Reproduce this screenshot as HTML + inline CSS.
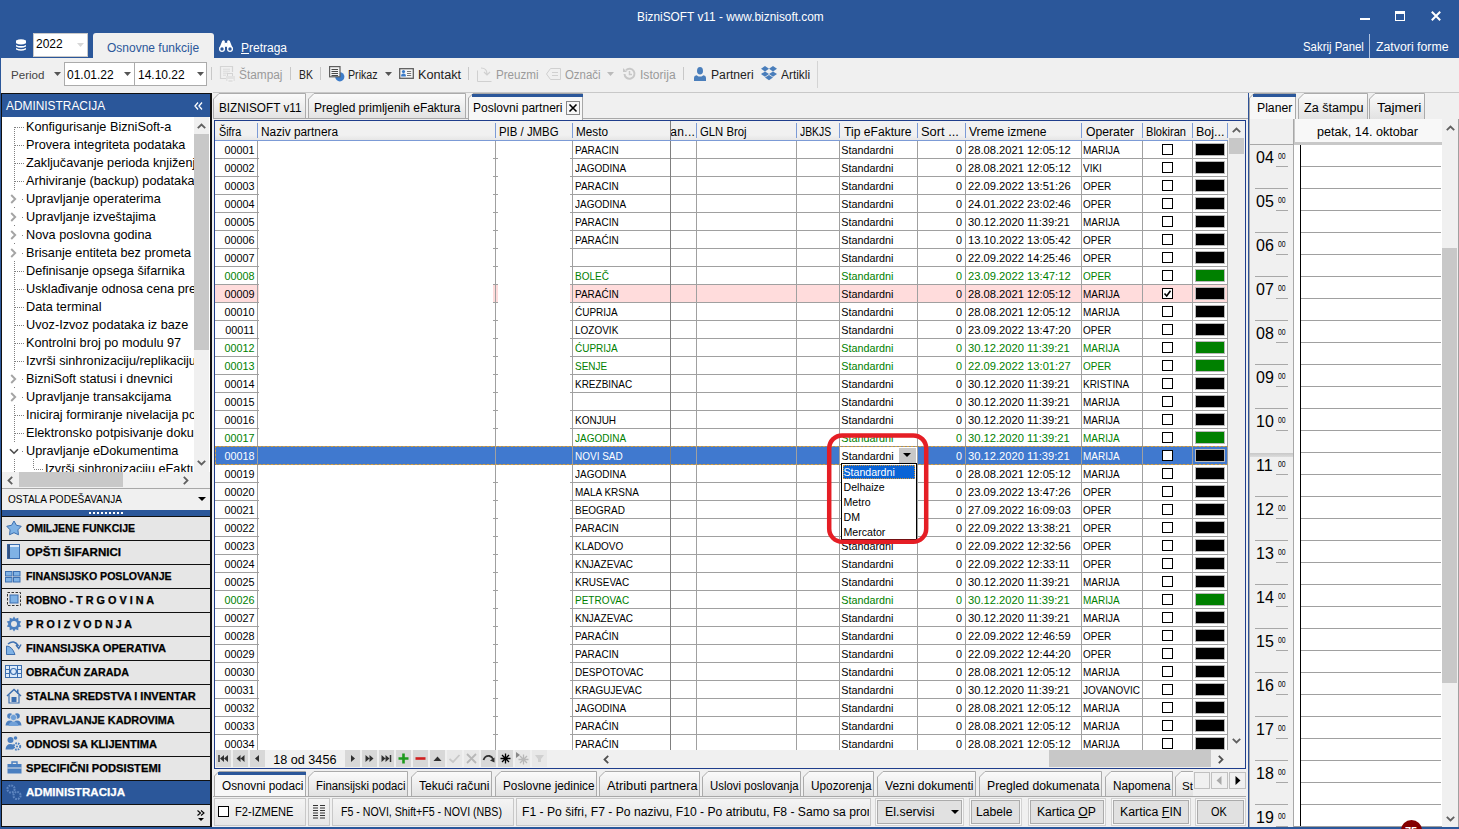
<!DOCTYPE html><html><head><meta charset="utf-8"><style>
html,body{margin:0;padding:0;}
body{width:1459px;height:829px;overflow:hidden;position:relative;background:#F0F0F0;font-family:"Liberation Sans",sans-serif;}
.t{position:absolute;white-space:nowrap;}
.r{position:absolute;box-sizing:border-box;}
svg.r{overflow:visible;}
</style></head><body>
<div class="r" style="left:0px;top:0px;width:1459px;height:58px;background:#2B579A;"></div>
<div class="t " style="left:637px;top:10.00px;font-size:12px;line-height:15px;color:#fff;transform:scaleX(0.9881);transform-origin:0 0;">BizniSOFT v11 - www.biznisoft.com</div>
<div class="r" style="left:1360px;top:18px;width:10px;height:2px;background:#fff;"></div>
<div class="r" style="left:1395px;top:11px;width:10px;height:10px;background:none;border:1.3px solid #fff;border-top-width:3px;"></div>
<svg class="r" style="left:1431px;top:11px;" width="10" height="10" viewBox="0 0 10 10"><path d="M0.8 0.8 L9.2 9.2 M9.2 0.8 L0.8 9.2" stroke="#fff" stroke-width="2"/></svg>
<svg class="r" style="left:16px;top:39px;" width="10" height="13" viewBox="0 0 10 13"><path d="M0 1.6 Q5 -0.9 10 1.6 V4.3 Q5 6.7 0 4.3Z M0 5.9 Q5 8.3 10 5.9 V7.6 Q5 10 0 7.6Z M0 9 Q5 11.4 10 9 V10.6 Q5 13 0 10.6Z" fill="#fff"/></svg>
<div class="r" style="left:33px;top:33px;width:55px;height:24px;background:#fff;border:1px solid #C9C9C9;"></div>
<div class="t " style="left:36px;top:37.00px;font-size:12px;line-height:15px;color:#000;">2022</div>
<svg class="r" style="left:77px;top:43px;" width="7" height="4" viewBox="0 0 7 4"><path d="M0 0 H7 L3.5 4Z" fill="#D8D8D8"/></svg>
<div class="r" style="left:93px;top:33px;width:121px;height:26px;background:#F0F0F0;border-radius:3px 3px 0 0;"></div>
<div class="t " style="left:107px;top:41.00px;font-size:12px;line-height:15px;color:#2B579A;">Osnovne funkcije</div>
<svg class="r" style="left:219px;top:39px;" width="14" height="14" viewBox="0 0 14 14"><path d="M3.2 2 Q4.4 0.6 5.8 2 L6 9.5 L0.2 9.5Z M8.2 2 Q9.6 0.6 10.8 2 L13.8 9.5 L8 9.5Z" fill="#fff"/><rect x="5.5" y="3.8" width="3" height="4" fill="#fff"/><circle cx="3" cy="10" r="3" fill="#fff"/><circle cx="11" cy="10" r="3" fill="#fff"/><circle cx="3" cy="10" r="1.7" fill="#2B579A"/><circle cx="11" cy="10" r="1.7" fill="#2B579A"/></svg>
<div class="t " style="left:241px;top:41.00px;font-size:12px;line-height:15px;color:#fff;"><u>P</u>retraga</div>
<div class="t " style="left:1302.5px;top:40.00px;font-size:12px;line-height:15px;color:#fff;transform:scaleX(0.9511);transform-origin:0 0;">Sakrij Panel</div>
<div class="r" style="left:1369px;top:34px;width:1px;height:24px;background:#AFC2E0;"></div>
<div class="t " style="left:1376px;top:40.00px;font-size:12px;line-height:15px;color:#fff;transform:scaleX(1.0257);transform-origin:0 0;">Zatvori forme</div>
<div class="r" style="left:1px;top:58px;width:1458px;height:35px;background:#F0F0F0;"></div>
<div class="t " style="left:11px;top:68.00px;font-size:11.6px;line-height:14px;color:#444;">Period</div>
<svg class="r" style="left:54px;top:72px;" width="7" height="4" viewBox="0 0 7 4"><path d="M0 0 H7 L3.5 4Z" fill="#555"/></svg>
<div class="r" style="left:64px;top:62px;width:71px;height:24px;background:#fff;border:1px solid #ABABAB;"></div>
<div class="t " style="left:67px;top:68.00px;font-size:12px;line-height:15px;color:#000;">01.01.22</div>
<svg class="r" style="left:124px;top:72px;" width="7" height="4" viewBox="0 0 7 4"><path d="M0 0 H7 L3.5 4Z" fill="#555"/></svg>
<div class="r" style="left:134px;top:62px;width:73px;height:24px;background:#fff;border:1px solid #ABABAB;"></div>
<div class="t " style="left:138px;top:68.00px;font-size:12px;line-height:15px;color:#000;">14.10.22</div>
<svg class="r" style="left:197px;top:72px;" width="7" height="4" viewBox="0 0 7 4"><path d="M0 0 H7 L3.5 4Z" fill="#555"/></svg>
<div class="r" style="left:211px;top:67px;width:1px;height:13px;background:#C8C8C8;"></div>
<div class="r" style="left:290px;top:67px;width:1px;height:13px;background:#C8C8C8;"></div>
<div class="r" style="left:320px;top:67px;width:1px;height:13px;background:#C8C8C8;"></div>
<div class="r" style="left:468px;top:67px;width:1px;height:13px;background:#C8C8C8;"></div>
<div class="r" style="left:683px;top:67px;width:1px;height:13px;background:#C8C8C8;"></div>
<svg class="r" style="left:220px;top:66px;" width="16" height="17" viewBox="0 0 16 17"><path d="M12.5 6 V0.5 H0.5 V12.5 H6" fill="none" stroke="#D4D4D4" stroke-width="1.2"/><path d="M3 3.2H10M3 5.2H10M3 7.2H8M3 9.2H6" stroke="#DADADA"/><rect x="7.5" y="7.5" width="5" height="3" fill="none" stroke="#D4D4D4"/><rect x="6" y="10" width="9" height="5" fill="#E2E2E2"/><rect x="8" y="13.5" width="5" height="3" fill="#E2E2E2" stroke="#F4F4F4" stroke-width="0.8"/></svg>
<div class="t " style="left:239.2px;top:68.00px;font-size:12px;line-height:15px;color:#9A9A9A;transform:scaleX(0.9881);transform-origin:0 0;">Štampaj</div>
<div class="t " style="left:299.4px;top:68.00px;font-size:12px;line-height:15px;color:#222;transform:scaleX(0.8683);transform-origin:0 0;">BK</div>
<svg class="r" style="left:328px;top:66px;" width="17" height="16" viewBox="0 0 17 16"><circle cx="11.8" cy="10.8" r="4.6" fill="#3D7CC9"/><rect x="1.6" y="0.6" width="10.4" height="10.2" fill="#F2F2F2" stroke="#5E5E5E" stroke-width="1.2"/><path d="M3.5 3.5H10M3.5 5.5H10M3.5 7.5H10M3.5 9.5H10" stroke="#4A4A4A" stroke-width="1"/></svg>
<div class="t " style="left:348.4px;top:68.00px;font-size:12px;line-height:15px;color:#222;transform:scaleX(0.8878);transform-origin:0 0;">Prikaz</div>
<svg class="r" style="left:385px;top:72px;" width="7" height="4" viewBox="0 0 7 4"><path d="M0 0 H7 L3.5 4Z" fill="#555"/></svg>
<svg class="r" style="left:399px;top:68px;" width="15" height="11" viewBox="0 0 15 11"><rect x="0.7" y="0.7" width="13.6" height="9.6" fill="#F7F7F7" stroke="#5E5E5E" stroke-width="1.3"/><circle cx="4.5" cy="3.6" r="1.6" fill="#3D7CC9"/><path d="M2.2 8.4 V7.2 Q2.2 5.6 4.5 5.6 Q6.8 5.6 6.8 7.2 V8.4Z" fill="#3D7CC9"/><path d="M8 3.5H12.2M8 5.5H12.2M8 7.5H12.2" stroke="#666" stroke-width="0.9"/></svg>
<div class="t " style="left:418.2px;top:68.00px;font-size:12px;line-height:15px;color:#222;transform:scaleX(1.0591);transform-origin:0 0;">Kontakt</div>
<svg class="r" style="left:477px;top:66px;" width="15" height="16" viewBox="0 0 15 16"><path d="M0.5 4.5 V15.5 H14.5" fill="none" stroke="#D0D0D0"/><path d="M4 2 Q10 2 10 8 M7 6 L10 9 L13 6" fill="none" stroke="#D0D0D0" stroke-width="1.2"/></svg>
<div class="t " style="left:496px;top:68.00px;font-size:12px;line-height:15px;color:#9A9A9A;transform:scaleX(0.9680);transform-origin:0 0;">Preuzmi</div>
<svg class="r" style="left:546px;top:68px;" width="15" height="12" viewBox="0 0 15 12"><path d="M4.5 0.5 H14.5 V11.5 H4.5 L0.5 6 Z" fill="none" stroke="#D0D0D0"/><path d="M6 4.5H12M6 7.5H12" stroke="#D0D0D0"/></svg>
<div class="t " style="left:565.2px;top:68.00px;font-size:12px;line-height:15px;color:#9A9A9A;transform:scaleX(0.9505);transform-origin:0 0;">Označi</div>
<svg class="r" style="left:607px;top:72px;" width="7" height="4" viewBox="0 0 7 4"><path d="M0 0 H7 L3.5 4Z" fill="#BBB"/></svg>
<svg class="r" style="left:622px;top:67px;" width="14" height="14" viewBox="0 0 14 14"><path d="M2.5 7 A5 5 0 1 0 4 3.2" fill="none" stroke="#C8C8C8" stroke-width="2"/><path d="M1 1 L5 5 L1 5Z" fill="#C8C8C8"/><path d="M7.5 4 V7.5 H10" fill="none" stroke="#C8C8C8" stroke-width="1.5"/></svg>
<div class="t " style="left:640px;top:68.00px;font-size:12px;line-height:15px;color:#9A9A9A;transform:scaleX(1.0072);transform-origin:0 0;">Istorija</div>
<svg class="r" style="left:694px;top:67px;" width="12" height="14" viewBox="0 0 12 14"><ellipse cx="6" cy="3.8" rx="3" ry="3.8" fill="#4A7EBB"/><path d="M0 14 V10.8 Q0 8.6 2.6 8.2 L4.5 9.4 H7.5 L9.4 8.2 Q12 8.6 12 10.8 V14Z" fill="#4A7EBB"/></svg>
<div class="t " style="left:711.2px;top:68.00px;font-size:12px;line-height:15px;color:#222;transform:scaleX(1.0139);transform-origin:0 0;">Partneri</div>
<svg class="r" style="left:761px;top:66px;" width="16" height="15" viewBox="0 0 16 15"><path d="M4 0 L0 2.7 L4 5.4 L8 2.7Z M12 0 L8 2.7 L12 5.4 L16 2.7Z M4 5.4 L0 8.1 L4 10.8 L8 8.1Z M12 5.4 L8 8.1 L12 10.8 L16 8.1Z M4 11.6 L8 9 L12 11.6 L8 14.3Z" fill="#4A7EBB"/></svg>
<div class="t " style="left:780.5px;top:68.00px;font-size:12px;line-height:15px;color:#222;transform:scaleX(0.9921);transform-origin:0 0;">Artikli</div>
<div class="r" style="left:817px;top:61px;width:1px;height:27px;background:#D4D4D4;"></div>
<div class="r" style="left:213px;top:92px;width:1246px;height:1px;background:#C8C8C8;"></div>
<div class="r" style="left:1px;top:93px;width:211px;height:734px;background:#fff;border:1px solid #111;border-right-width:2px;"></div>
<div class="r" style="left:2px;top:94px;width:208px;height:23px;background:#2B579A;"></div>
<div class="t " style="left:6px;top:99.00px;font-size:11.9px;line-height:15px;color:#fff;">ADMINISTRACIJA</div>
<svg class="r" style="left:194px;top:102px;" width="9" height="8" viewBox="0 0 9 8"><path d="M4 0.5 L1 4 L4 7.5 M8 0.5 L5 4 L8 7.5" fill="none" stroke="#fff" stroke-width="1.3"/></svg>
<div class="r" style="left:2px;top:117px;width:192px;height:355px;overflow:hidden;background:#fff">
<div class="r" style="left:12px;top:10px;width:1px;height:345px;background:repeating-linear-gradient(180deg,#808080 0 1px,transparent 1px 2px)"></div>
<div class="t " style="left:24px;top:2.00px;font-size:12.7px;line-height:16px;color:#000;">Konfigurisanje BizniSoft-a</div>
<div class="r" style="left:13px;top:10px;width:9px;height:1px;background:repeating-linear-gradient(90deg,#808080 0 1px,transparent 1px 2px)"></div>
<div class="t " style="left:24px;top:20.00px;font-size:12.7px;line-height:16px;color:#000;">Provera integriteta podataka</div>
<div class="r" style="left:13px;top:28px;width:9px;height:1px;background:repeating-linear-gradient(90deg,#808080 0 1px,transparent 1px 2px)"></div>
<div class="t " style="left:24px;top:38.00px;font-size:12.7px;line-height:16px;color:#000;">Zaključavanje perioda knjiženja</div>
<div class="r" style="left:13px;top:46px;width:9px;height:1px;background:repeating-linear-gradient(90deg,#808080 0 1px,transparent 1px 2px)"></div>
<div class="t " style="left:24px;top:56.00px;font-size:12.7px;line-height:16px;color:#000;">Arhiviranje (backup) podataka</div>
<div class="r" style="left:13px;top:64px;width:9px;height:1px;background:repeating-linear-gradient(90deg,#808080 0 1px,transparent 1px 2px)"></div>
<div class="t " style="left:24px;top:74.00px;font-size:12.7px;line-height:16px;color:#000;">Upravljanje operaterima</div>
<div class="r" style="left:7px;top:74px;width:11px;height:16px;background:#fff;"></div>
<div class="r" style="left:20px;top:82px;width:1px;height:1px;background:#808080;"></div>
<svg class="r" style="left:8px;top:77px;" width="7" height="10" viewBox="0 0 7 10"><path d="M1.2 1 L5.2 5 L1.2 9" fill="none" stroke="#A4A4A4" stroke-width="1.9"/></svg>
<div class="t " style="left:24px;top:92.00px;font-size:12.7px;line-height:16px;color:#000;">Upravljanje izveštajima</div>
<div class="r" style="left:7px;top:92px;width:11px;height:16px;background:#fff;"></div>
<div class="r" style="left:20px;top:100px;width:1px;height:1px;background:#808080;"></div>
<svg class="r" style="left:8px;top:95px;" width="7" height="10" viewBox="0 0 7 10"><path d="M1.2 1 L5.2 5 L1.2 9" fill="none" stroke="#A4A4A4" stroke-width="1.9"/></svg>
<div class="t " style="left:24px;top:110.00px;font-size:12.7px;line-height:16px;color:#000;">Nova poslovna godina</div>
<div class="r" style="left:7px;top:110px;width:11px;height:16px;background:#fff;"></div>
<div class="r" style="left:20px;top:118px;width:1px;height:1px;background:#808080;"></div>
<svg class="r" style="left:8px;top:113px;" width="7" height="10" viewBox="0 0 7 10"><path d="M1.2 1 L5.2 5 L1.2 9" fill="none" stroke="#A4A4A4" stroke-width="1.9"/></svg>
<div class="t " style="left:24px;top:128.00px;font-size:12.7px;line-height:16px;color:#000;">Brisanje entiteta bez prometa</div>
<div class="r" style="left:7px;top:128px;width:11px;height:16px;background:#fff;"></div>
<div class="r" style="left:20px;top:136px;width:1px;height:1px;background:#808080;"></div>
<svg class="r" style="left:8px;top:131px;" width="7" height="10" viewBox="0 0 7 10"><path d="M1.2 1 L5.2 5 L1.2 9" fill="none" stroke="#A4A4A4" stroke-width="1.9"/></svg>
<div class="t " style="left:24px;top:146.00px;font-size:12.7px;line-height:16px;color:#000;">Definisanje opsega šifarnika</div>
<div class="r" style="left:13px;top:154px;width:9px;height:1px;background:repeating-linear-gradient(90deg,#808080 0 1px,transparent 1px 2px)"></div>
<div class="t " style="left:24px;top:164.00px;font-size:12.7px;line-height:16px;color:#000;">Usklađivanje odnosa cena prema</div>
<div class="r" style="left:13px;top:172px;width:9px;height:1px;background:repeating-linear-gradient(90deg,#808080 0 1px,transparent 1px 2px)"></div>
<div class="t " style="left:24px;top:182.00px;font-size:12.7px;line-height:16px;color:#000;">Data terminal</div>
<div class="r" style="left:13px;top:190px;width:9px;height:1px;background:repeating-linear-gradient(90deg,#808080 0 1px,transparent 1px 2px)"></div>
<div class="t " style="left:24px;top:200.00px;font-size:12.7px;line-height:16px;color:#000;">Uvoz-Izvoz podataka iz baze</div>
<div class="r" style="left:13px;top:208px;width:9px;height:1px;background:repeating-linear-gradient(90deg,#808080 0 1px,transparent 1px 2px)"></div>
<div class="t " style="left:24px;top:218.00px;font-size:12.7px;line-height:16px;color:#000;">Kontrolni broj po modulu 97</div>
<div class="r" style="left:13px;top:226px;width:9px;height:1px;background:repeating-linear-gradient(90deg,#808080 0 1px,transparent 1px 2px)"></div>
<div class="t " style="left:24px;top:236.00px;font-size:12.7px;line-height:16px;color:#000;">Izvrši sinhronizaciju/replikaciju</div>
<div class="r" style="left:13px;top:244px;width:9px;height:1px;background:repeating-linear-gradient(90deg,#808080 0 1px,transparent 1px 2px)"></div>
<div class="t " style="left:24px;top:254.00px;font-size:12.7px;line-height:16px;color:#000;">BizniSoft statusi i dnevnici</div>
<div class="r" style="left:7px;top:254px;width:11px;height:16px;background:#fff;"></div>
<div class="r" style="left:20px;top:262px;width:1px;height:1px;background:#808080;"></div>
<svg class="r" style="left:8px;top:257px;" width="7" height="10" viewBox="0 0 7 10"><path d="M1.2 1 L5.2 5 L1.2 9" fill="none" stroke="#A4A4A4" stroke-width="1.9"/></svg>
<div class="t " style="left:24px;top:272.00px;font-size:12.7px;line-height:16px;color:#000;">Upravljanje transakcijama</div>
<div class="r" style="left:7px;top:272px;width:11px;height:16px;background:#fff;"></div>
<div class="r" style="left:20px;top:280px;width:1px;height:1px;background:#808080;"></div>
<svg class="r" style="left:8px;top:275px;" width="7" height="10" viewBox="0 0 7 10"><path d="M1.2 1 L5.2 5 L1.2 9" fill="none" stroke="#A4A4A4" stroke-width="1.9"/></svg>
<div class="t " style="left:24px;top:290.00px;font-size:12.7px;line-height:16px;color:#000;">Iniciraj formiranje nivelacija po</div>
<div class="r" style="left:13px;top:298px;width:9px;height:1px;background:repeating-linear-gradient(90deg,#808080 0 1px,transparent 1px 2px)"></div>
<div class="t " style="left:24px;top:308.00px;font-size:12.7px;line-height:16px;color:#000;">Elektronsko potpisivanje dokumenata</div>
<div class="r" style="left:13px;top:316px;width:9px;height:1px;background:repeating-linear-gradient(90deg,#808080 0 1px,transparent 1px 2px)"></div>
<div class="t " style="left:24px;top:326.00px;font-size:12.7px;line-height:16px;color:#000;">Upravljanje eDokumentima</div>
<div class="r" style="left:7px;top:326px;width:11px;height:16px;background:#fff;"></div>
<div class="r" style="left:20px;top:334px;width:1px;height:1px;background:#808080;"></div>
<svg class="r" style="left:7px;top:331px;" width="10" height="7" viewBox="0 0 10 7"><path d="M1 1.2 L5 5.2 L9 1.2" fill="none" stroke="#4A4A4A" stroke-width="1.6"/></svg>
<div class="t " style="left:43px;top:344.00px;font-size:12.7px;line-height:16px;color:#000;">Izvrši sinhronizaciju eFaktura</div>
<div class="r" style="left:32px;top:352px;width:9px;height:1px;background:repeating-linear-gradient(90deg,#808080 0 1px,transparent 1px 2px)"></div>
<div class="r" style="left:31px;top:342px;width:1px;height:10px;background:repeating-linear-gradient(180deg,#808080 0 1px,transparent 1px 2px)"></div>
</div>
<div class="r" style="left:194px;top:117px;width:15px;height:355px;background:#F0F0F0;"></div>
<div class="r" style="left:194px;top:134px;width:15px;height:216px;background:#C8C8C8;"></div>
<svg class="r" style="left:197px;top:123px;" width="9" height="6" viewBox="0 0 9 6"><path d="M0.8 5.2 L4.5 1.5 L8.2 5.2" fill="none" stroke="#606060" stroke-width="1.8"/></svg>
<svg class="r" style="left:197px;top:460px;" width="9" height="6" viewBox="0 0 9 6"><path d="M0.8 0.8 L4.5 4.5 L8.2 0.8" fill="none" stroke="#606060" stroke-width="1.8"/></svg>
<div class="r" style="left:2px;top:472px;width:208px;height:16px;background:#F0F0F0;"></div>
<div class="r" style="left:19px;top:472px;width:104px;height:15px;background:#C8C8C8;"></div>
<svg class="r" style="left:7px;top:476px;" width="6" height="9" viewBox="0 0 6 9"><path d="M5.2 0.8 L1.5 4.5 L5.2 8.2" fill="none" stroke="#606060" stroke-width="1.8"/></svg>
<svg class="r" style="left:183px;top:476px;" width="6" height="9" viewBox="0 0 6 9"><path d="M0.8 0.8 L4.5 4.5 L0.8 8.2" fill="none" stroke="#606060" stroke-width="1.8"/></svg>
<div class="r" style="left:2px;top:488px;width:208px;height:1px;background:#A8A8A8;"></div>
<div class="r" style="left:2px;top:489px;width:208px;height:21px;background:#F0F0F0;"></div>
<div class="t " style="left:7.5px;top:492.00px;font-size:11px;line-height:14px;color:#000;transform:scaleX(0.9133);transform-origin:0 0;">OSTALA PODEŠAVANJA</div>
<svg class="r" style="left:198px;top:497px;" width="8" height="4" viewBox="0 0 8 4"><path d="M0 0 H8 L4 4Z" fill="#000"/></svg>
<div class="r" style="left:2px;top:510px;width:208px;height:6px;background:#2B579A;"></div>
<div class="r" style="left:89px;top:512px;width:34px;height:2px;background:repeating-linear-gradient(90deg,#fff 0 2px,transparent 2px 4px)"></div>
<div class="r" style="left:2px;top:516px;width:208px;height:1px;background:#111;"></div>
<div class="r" style="left:2px;top:517px;width:208px;height:23px;background:#E6E6E6;"></div>
<div class="r" style="left:2px;top:540px;width:208px;height:1px;background:#111;"></div>
<div class="t " style="left:26px;top:522.00px;font-size:10.5px;line-height:13px;color:#000;font-weight:bold;transform:scaleX(0.9991);transform-origin:0 0;-webkit-text-stroke:0.25px #000;">OMILJENE FUNKCIJE</div>
<svg class="r" style="left:6px;top:520px" width="16" height="16" viewBox="0 0 16 16"><path d="M8.00 1.00 L10.41 5.28 L15.23 6.25 L11.90 9.87 L12.47 14.75 L8.00 12.70 L3.53 14.75 L4.10 9.87 L0.77 6.25 L5.59 5.28Z" fill="#7FB2E5" stroke="#3C6FB0" stroke-width="1" stroke-linejoin="round"/></svg>
<div class="r" style="left:2px;top:541px;width:208px;height:23px;background:#E6E6E6;"></div>
<div class="r" style="left:2px;top:564px;width:208px;height:1px;background:#111;"></div>
<div class="t " style="left:26px;top:546.00px;font-size:10.5px;line-height:13px;color:#000;font-weight:bold;transform:scaleX(1.1003);transform-origin:0 0;-webkit-text-stroke:0.25px #000;">OPŠTI ŠIFARNICI</div>
<svg class="r" style="left:7px;top:544px" width="13" height="16" viewBox="0 0 13 16"><rect x="0.5" y="0.5" width="12" height="14" fill="#7FB2E5" stroke="#3C6FB0"/><rect x="0.5" y="0.5" width="2.5" height="14" fill="#2F4F80"/><rect x="3" y="1" width="9" height="2" fill="#DDEBFA"/></svg>
<div class="r" style="left:2px;top:565px;width:208px;height:23px;background:#E6E6E6;"></div>
<div class="r" style="left:2px;top:588px;width:208px;height:1px;background:#111;"></div>
<div class="t " style="left:26px;top:570.00px;font-size:10.5px;line-height:13px;color:#000;font-weight:bold;transform:scaleX(1.0076);transform-origin:0 0;-webkit-text-stroke:0.25px #000;">FINANSIJSKO POSLOVANJE</div>
<svg class="r" style="left:5px;top:571px" width="16" height="12" viewBox="0 0 16 12"><rect x="0.5" y="0.5" width="6.5" height="4.5" fill="#7FB2E5" stroke="#3C6FB0"/><rect x="8.5" y="0.5" width="6.5" height="4.5" fill="#7FB2E5" stroke="#3C6FB0"/><rect x="0.5" y="6.5" width="6.5" height="4.5" fill="#7FB2E5" stroke="#3C6FB0"/><rect x="8.5" y="6.5" width="6.5" height="4.5" fill="#7FB2E5" stroke="#3C6FB0"/></svg>
<div class="r" style="left:2px;top:589px;width:208px;height:23px;background:#E6E6E6;"></div>
<div class="r" style="left:2px;top:612px;width:208px;height:1px;background:#111;"></div>
<div class="t " style="left:26px;top:594.00px;font-size:10.5px;line-height:13px;color:#000;font-weight:bold;transform:scaleX(1.0334);transform-origin:0 0;-webkit-text-stroke:0.25px #000;">ROBNO - T R G O V I N A</div>
<svg class="r" style="left:7px;top:592px" width="15" height="15" viewBox="0 0 15 15"><rect x="0.5" y="0.5" width="13" height="13" fill="none" stroke="#333" stroke-dasharray="2.5 1.5"/><rect x="3" y="3" width="8" height="8" fill="#7FB2E5" stroke="#3C6FB0"/></svg>
<div class="r" style="left:2px;top:613px;width:208px;height:23px;background:#E6E6E6;"></div>
<div class="r" style="left:2px;top:636px;width:208px;height:1px;background:#111;"></div>
<div class="t " style="left:26px;top:618.00px;font-size:10.5px;line-height:13px;color:#000;font-weight:bold;transform:scaleX(1.0150);transform-origin:0 0;-webkit-text-stroke:0.25px #000;">P R O I Z V O D N J A</div>
<svg class="r" style="left:6px;top:616px" width="16" height="16" viewBox="0 0 16 16"><path d="M8 0.5 L9.5 2.8 L12.3 1.8 L12.4 4.7 L15.2 5.5 L13.6 8 L15.2 10.5 L12.4 11.3 L12.3 14.2 L9.5 13.2 L8 15.5 L6.5 13.2 L3.7 14.2 L3.6 11.3 L0.8 10.5 L2.4 8 L0.8 5.5 L3.6 4.7 L3.7 1.8 L6.5 2.8Z" fill="#4A7FC0"/><circle cx="8" cy="8" r="3" fill="#E6E6E6"/></svg>
<div class="r" style="left:2px;top:637px;width:208px;height:23px;background:#E6E6E6;"></div>
<div class="r" style="left:2px;top:660px;width:208px;height:1px;background:#111;"></div>
<div class="t " style="left:26px;top:642.00px;font-size:10.5px;line-height:13px;color:#000;font-weight:bold;transform:scaleX(1.0587);transform-origin:0 0;-webkit-text-stroke:0.25px #000;">FINANSIJSKA OPERATIVA</div>
<svg class="r" style="left:6px;top:640px" width="16" height="15" viewBox="0 0 16 15"><path d="M0.5 14.5 V6 Q6 6 9 14.5Z" fill="#7FB2E5" stroke="#3C6FB0"/><path d="M2 4 Q8 -1 12.5 6" fill="none" stroke="#3C6FB0" stroke-width="1.5"/><path d="M10 5 L12.7 8.5 L15 4.5" fill="none" stroke="#3C6FB0" stroke-width="1.5"/></svg>
<div class="r" style="left:2px;top:661px;width:208px;height:23px;background:#E6E6E6;"></div>
<div class="r" style="left:2px;top:684px;width:208px;height:1px;background:#111;"></div>
<div class="t " style="left:26px;top:666.00px;font-size:10.5px;line-height:13px;color:#000;font-weight:bold;transform:scaleX(1.0207);transform-origin:0 0;-webkit-text-stroke:0.25px #000;">OBRAČUN ZARADA</div>
<svg class="r" style="left:5px;top:665px" width="17" height="14" viewBox="0 0 17 14"><rect x="0.5" y="0.5" width="16" height="12" fill="#DDEBFA" stroke="#3C6FB0"/><path d="M0.5 4.5 H4 M0.5 8.5 H4 M13 4.5 H16.5 M13 8.5 H16.5 M4.5 0.5 V12.5 M12.5 0.5 V12.5" stroke="#3C6FB0"/><circle cx="8.5" cy="6.5" r="3" fill="none" stroke="#3C6FB0" stroke-width="1.2"/></svg>
<div class="r" style="left:2px;top:685px;width:208px;height:23px;background:#E6E6E6;"></div>
<div class="r" style="left:2px;top:708px;width:208px;height:1px;background:#111;"></div>
<div class="t " style="left:26px;top:690.00px;font-size:10.5px;line-height:13px;color:#000;font-weight:bold;transform:scaleX(1.0483);transform-origin:0 0;-webkit-text-stroke:0.25px #000;">STALNA SREDSTVA I INVENTAR</div>
<svg class="r" style="left:6px;top:688px" width="16" height="16" viewBox="0 0 16 16"><path d="M1 8 L8 1.5 L15 8" fill="none" stroke="#3C6FB0" stroke-width="1.5"/><path d="M3 7 V15 H13 V7" fill="none" stroke="#3C6FB0" stroke-width="1.2"/><rect x="5.5" y="9" width="5" height="5" fill="#3C6FB0"/><rect x="11" y="1.5" width="1.5" height="4" fill="#3C6FB0"/></svg>
<div class="r" style="left:2px;top:709px;width:208px;height:23px;background:#E6E6E6;"></div>
<div class="r" style="left:2px;top:732px;width:208px;height:1px;background:#111;"></div>
<div class="t " style="left:26px;top:714.00px;font-size:10.5px;line-height:13px;color:#000;font-weight:bold;transform:scaleX(1.0333);transform-origin:0 0;-webkit-text-stroke:0.25px #000;">UPRAVLJANJE KADROVIMA</div>
<svg class="r" style="left:5px;top:712px" width="17" height="14" viewBox="0 0 17 14"><circle cx="5" cy="4" r="2.8" fill="#4A7FC0"/><circle cx="12" cy="4" r="2.8" fill="#4A7FC0"/><circle cx="8.5" cy="5.5" r="3.2" fill="#6FA0D8" stroke="#E6E6E6" stroke-width="0.8"/><path d="M0.5 13.5 Q1 8.5 5 8.5 Q8.5 8.5 8.5 13.5Z M8.5 13.5 Q8.5 8.5 12 8.5 Q16 8.5 16.5 13.5Z" fill="#4A7FC0"/><path d="M3.5 14 Q4 9.5 8.5 9.5 Q13 9.5 13.5 14Z" fill="#6FA0D8"/></svg>
<div class="r" style="left:2px;top:733px;width:208px;height:23px;background:#E6E6E6;"></div>
<div class="r" style="left:2px;top:756px;width:208px;height:1px;background:#111;"></div>
<div class="t " style="left:26px;top:738.00px;font-size:10.5px;line-height:13px;color:#000;font-weight:bold;transform:scaleX(1.0518);transform-origin:0 0;-webkit-text-stroke:0.25px #000;">ODNOSI SA KLIJENTIMA</div>
<svg class="r" style="left:5px;top:736px" width="17" height="15" viewBox="0 0 17 15"><circle cx="5.5" cy="4" r="3" fill="#4A7FC0"/><path d="M0.5 13.5 Q1 8 5.5 8 Q9 8 9.5 11 L8 13.5Z" fill="#4A7FC0"/><circle cx="12" cy="10.5" r="3.2" fill="none" stroke="#4A7FC0" stroke-width="2" stroke-dasharray="1.6 1"/><circle cx="12" cy="10.5" r="1" fill="#4A7FC0"/><circle cx="10.5" cy="2" r="1.8" fill="#4A7FC0"/></svg>
<div class="r" style="left:2px;top:757px;width:208px;height:23px;background:#E6E6E6;"></div>
<div class="r" style="left:2px;top:780px;width:208px;height:1px;background:#111;"></div>
<div class="t " style="left:26px;top:762.00px;font-size:10.5px;line-height:13px;color:#000;font-weight:bold;transform:scaleX(1.0648);transform-origin:0 0;-webkit-text-stroke:0.25px #000;">SPECIFIČNI PODSISTEMI</div>
<svg class="r" style="left:7px;top:761px" width="15" height="13" viewBox="0 0 15 13"><rect x="0.5" y="3" width="14" height="9.5" fill="#4A7FC0"/><path d="M5 3 V1 H10 V3" fill="none" stroke="#4A7FC0" stroke-width="1.4"/><rect x="0.5" y="6.5" width="14" height="1" fill="#E6E6E6"/></svg>
<div class="r" style="left:2px;top:781px;width:208px;height:23px;background:#2B579A;"></div>
<div class="r" style="left:2px;top:804px;width:208px;height:1px;background:#111;"></div>
<div class="t " style="left:26px;top:786.00px;font-size:10.5px;line-height:13px;color:#fff;font-weight:bold;transform:scaleX(1.1020);transform-origin:0 0;-webkit-text-stroke:0.25px #fff;">ADMINISTRACIJA</div>
<svg class="r" style="left:6px;top:784px" width="16" height="17" viewBox="0 0 16 17"><circle cx="5" cy="5" r="3.6" fill="none" stroke="#5F86C0" stroke-width="2" stroke-dasharray="1.8 1"/><circle cx="11" cy="11.5" r="3.6" fill="none" stroke="#5F86C0" stroke-width="2" stroke-dasharray="1.8 1"/></svg>
<div class="r" style="left:2px;top:805px;width:208px;height:21px;background:#E6E6E6;"></div>
<svg class="r" style="left:197px;top:810px;" width="8" height="6" viewBox="0 0 8 6"><path d="M0.5 0.5 L3.5 3 L0.5 5.5 M4 0.5 L7 3 L4 5.5" fill="none" stroke="#000" stroke-width="1.1"/></svg>
<svg class="r" style="left:198px;top:818px;" width="6" height="3" viewBox="0 0 6 3"><path d="M0 0 H6 L3 3Z" fill="#000"/></svg>
<svg class="r" style="left:213px;top:93px" width="94" height="26"><defs><linearGradient id="g21393" x1="0" y1="0" x2="0" y2="1"><stop offset="0" stop-color="#FBFBFB"/><stop offset="1" stop-color="#E2E2E2"/></linearGradient></defs><path d="M0.5 26 V6 L6 0.5 H92.5 V26" fill="url(#g21393)" stroke="#ABABAB"/></svg>
<div class="t " style="left:218.5px;top:101.00px;font-size:12px;line-height:15px;color:#000;transform:scaleX(0.9793);transform-origin:0 0;">BIZNISOFT v11</div>
<svg class="r" style="left:308px;top:93px" width="159" height="26"><defs><linearGradient id="g30893" x1="0" y1="0" x2="0" y2="1"><stop offset="0" stop-color="#FBFBFB"/><stop offset="1" stop-color="#E2E2E2"/></linearGradient></defs><path d="M0.5 26 V6 L6 0.5 H157.5 V26" fill="url(#g30893)" stroke="#ABABAB"/></svg>
<div class="t " style="left:314px;top:101.00px;font-size:12px;line-height:15px;color:#000;transform:scaleX(0.9984);transform-origin:0 0;">Pregled primljenih eFaktura</div>
<svg class="r" style="left:468px;top:93px" width="116" height="27"><path d="M0.5 27 V5 L5 0.5 H114.5 V27" fill="#F7F7F7" stroke="#A8A8A8"/><rect x="4" y="1" width="111" height="3" fill="#2B579A"/></svg>
<div class="t " style="left:472.8px;top:101.00px;font-size:12px;line-height:15px;color:#000;transform:scaleX(1.0013);transform-origin:0 0;">Poslovni partneri</div>
<div class="r" style="left:566px;top:101px;width:14px;height:14px;background:#F7F7F7;border:1px solid #888;"></div>
<div class="r" style="left:583px;top:118px;width:665px;height:1px;background:#A8A8A8;"></div>
<div class="r" style="left:213px;top:118px;width:255px;height:1px;background:#A8A8A8;"></div>
<svg class="r" style="left:568px;top:103px;" width="10" height="10" viewBox="0 0 10 10"><path d="M1.5 1.5 L8.5 8.5 M8.5 1.5 L1.5 8.5" stroke="#000" stroke-width="1.6"/></svg>
<div class="r" style="left:214px;top:120px;width:1032px;height:649px;background:#fff;border:1px solid #1F3E8C;"></div>
<div class="r" style="left:215px;top:121px;width:1013px;height:19px;background:linear-gradient(#F1F1F1 0, #F1F1F1 14px, #E6E6E6 19px);"></div>
<div class="r" style="left:215px;top:140px;width:1013px;height:1px;background:#7C9BD6;"></div>
<div class="t " style="left:218.5px;top:125.00px;font-size:12px;line-height:15px;color:#000;transform:scaleX(0.8997);transform-origin:0 0;">Šifra</div>
<div class="t " style="left:260.8px;top:125.00px;font-size:12px;line-height:15px;color:#000;transform:scaleX(0.9867);transform-origin:0 0;">Naziv partnera</div>
<div class="t " style="left:499.3px;top:125.00px;font-size:12px;line-height:15px;color:#000;transform:scaleX(0.9509);transform-origin:0 0;">PIB / JMBG</div>
<div class="t " style="left:576.2px;top:125.00px;font-size:12px;line-height:15px;color:#000;transform:scaleX(0.9823);transform-origin:0 0;">Mesto</div>
<div class="t " style="left:700.4px;top:125.00px;font-size:12px;line-height:15px;color:#000;transform:scaleX(0.9423);transform-origin:0 0;">GLN Broj</div>
<div class="t " style="left:799.6px;top:125.00px;font-size:12px;line-height:15px;color:#000;transform:scaleX(0.8636);transform-origin:0 0;">JBKJS</div>
<div class="t " style="left:844px;top:125.00px;font-size:12px;line-height:15px;color:#000;transform:scaleX(1.0102);transform-origin:0 0;">Tip eFakture</div>
<div class="t " style="left:921.4px;top:125.00px;font-size:12px;line-height:15px;color:#000;transform:scaleX(1.0723);transform-origin:0 0;">Sort ...</div>
<div class="t " style="left:969px;top:125.00px;font-size:12px;line-height:15px;color:#000;transform:scaleX(1.0063);transform-origin:0 0;">Vreme izmene</div>
<div class="t " style="left:1085.5px;top:125.00px;font-size:12px;line-height:15px;color:#000;transform:scaleX(1.0157);transform-origin:0 0;">Operater</div>
<div class="t " style="left:1146.2px;top:125.00px;font-size:12px;line-height:15px;color:#000;transform:scaleX(0.9226);transform-origin:0 0;">Blokiran</div>
<div class="t " style="left:1195.6px;top:125.00px;font-size:12px;line-height:15px;color:#000;transform:scaleX(1.0422);transform-origin:0 0;">Boj...</div>
<div class="r" style="left:671px;top:121px;width:25px;height:19px;overflow:hidden">
<div class="t " style="left:-11px;top:4.00px;font-size:12px;line-height:15px;color:#000;letter-spacing:0.3px;">Man...</div>
</div>
<div class="r" style="left:257px;top:123px;width:1px;height:15px;background:#7C9BD6;"></div>
<div class="r" style="left:495px;top:123px;width:1px;height:15px;background:#7C9BD6;"></div>
<div class="r" style="left:572px;top:123px;width:1px;height:15px;background:#7C9BD6;"></div>
<div class="r" style="left:696px;top:123px;width:1px;height:15px;background:#7C9BD6;"></div>
<div class="r" style="left:796px;top:123px;width:1px;height:15px;background:#7C9BD6;"></div>
<div class="r" style="left:839px;top:123px;width:1px;height:15px;background:#7C9BD6;"></div>
<div class="r" style="left:917px;top:123px;width:1px;height:15px;background:#7C9BD6;"></div>
<div class="r" style="left:965px;top:123px;width:1px;height:15px;background:#7C9BD6;"></div>
<div class="r" style="left:1081px;top:123px;width:1px;height:15px;background:#7C9BD6;"></div>
<div class="r" style="left:1142px;top:123px;width:1px;height:15px;background:#7C9BD6;"></div>
<div class="r" style="left:1192px;top:123px;width:1px;height:15px;background:#7C9BD6;"></div>
<div class="r" style="left:1227px;top:123px;width:1px;height:15px;background:#7C9BD6;"></div>
<div class="r" style="left:215px;top:141px;width:1013px;height:609px;overflow:hidden">
<div class="r" style="left:0px;top:17px;width:1013px;height:1px;background:#A0A0A0;"></div>
<div class="t" style="left:0px;width:39.5px;text-align:right;top:2.26px;font-size:10.8px;line-height:14px;color:#000">00001</div>
<div class="t " style="left:359.6px;top:2.00px;font-size:10.8px;line-height:14px;color:#000;transform:scaleX(0.925);transform-origin:0 0;">PARACIN</div>
<div class="t " style="left:626.2px;top:2.00px;font-size:10.8px;line-height:14px;color:#000;">Standardni</div>
<div class="t" style="left:702px;width:45px;text-align:right;top:2.26px;font-size:10.8px;line-height:14px;color:#000">0</div>
<div class="t " style="left:753px;top:2.00px;font-size:11.19px;line-height:14px;color:#000;">28.08.2021 12:05:12</div>
<div class="t " style="left:868.3px;top:2.00px;font-size:10.8px;line-height:14px;color:#000;transform:scaleX(0.925);transform-origin:0 0;width:63px;overflow:hidden;">MARIJA</div>
<div class="r" style="left:947px;top:3px;width:11px;height:11px;background:#fff;border:1px solid #000;"></div>
<div class="r" style="left:980px;top:2px;width:30px;height:13px;background:#000;border:1px solid #B8B8B8;"></div>
<div class="r" style="left:0px;top:35px;width:1013px;height:1px;background:#A0A0A0;"></div>
<div class="t" style="left:0px;width:39.5px;text-align:right;top:20.26px;font-size:10.8px;line-height:14px;color:#000">00002</div>
<div class="t " style="left:359.6px;top:20.00px;font-size:10.8px;line-height:14px;color:#000;transform:scaleX(0.925);transform-origin:0 0;">JAGODINA</div>
<div class="t " style="left:626.2px;top:20.00px;font-size:10.8px;line-height:14px;color:#000;">Standardni</div>
<div class="t" style="left:702px;width:45px;text-align:right;top:20.26px;font-size:10.8px;line-height:14px;color:#000">0</div>
<div class="t " style="left:753px;top:20.00px;font-size:11.19px;line-height:14px;color:#000;">28.08.2021 12:05:12</div>
<div class="t " style="left:868.3px;top:20.00px;font-size:10.8px;line-height:14px;color:#000;transform:scaleX(0.925);transform-origin:0 0;width:63px;overflow:hidden;">VIKI</div>
<div class="r" style="left:947px;top:21px;width:11px;height:11px;background:#fff;border:1px solid #000;"></div>
<div class="r" style="left:980px;top:20px;width:30px;height:13px;background:#000;border:1px solid #B8B8B8;"></div>
<div class="r" style="left:0px;top:53px;width:1013px;height:1px;background:#A0A0A0;"></div>
<div class="t" style="left:0px;width:39.5px;text-align:right;top:38.26px;font-size:10.8px;line-height:14px;color:#000">00003</div>
<div class="t " style="left:359.6px;top:38.00px;font-size:10.8px;line-height:14px;color:#000;transform:scaleX(0.925);transform-origin:0 0;">PARACIN</div>
<div class="t " style="left:626.2px;top:38.00px;font-size:10.8px;line-height:14px;color:#000;">Standardni</div>
<div class="t" style="left:702px;width:45px;text-align:right;top:38.26px;font-size:10.8px;line-height:14px;color:#000">0</div>
<div class="t " style="left:753px;top:38.00px;font-size:11.19px;line-height:14px;color:#000;">22.09.2022 13:51:26</div>
<div class="t " style="left:868.3px;top:38.00px;font-size:10.8px;line-height:14px;color:#000;transform:scaleX(0.925);transform-origin:0 0;width:63px;overflow:hidden;">OPER</div>
<div class="r" style="left:947px;top:39px;width:11px;height:11px;background:#fff;border:1px solid #000;"></div>
<div class="r" style="left:980px;top:38px;width:30px;height:13px;background:#000;border:1px solid #B8B8B8;"></div>
<div class="r" style="left:0px;top:71px;width:1013px;height:1px;background:#A0A0A0;"></div>
<div class="t" style="left:0px;width:39.5px;text-align:right;top:56.26px;font-size:10.8px;line-height:14px;color:#000">00004</div>
<div class="t " style="left:359.6px;top:56.00px;font-size:10.8px;line-height:14px;color:#000;transform:scaleX(0.925);transform-origin:0 0;">JAGODINA</div>
<div class="t " style="left:626.2px;top:56.00px;font-size:10.8px;line-height:14px;color:#000;">Standardni</div>
<div class="t" style="left:702px;width:45px;text-align:right;top:56.26px;font-size:10.8px;line-height:14px;color:#000">0</div>
<div class="t " style="left:753px;top:56.00px;font-size:11.19px;line-height:14px;color:#000;">24.01.2022 23:02:46</div>
<div class="t " style="left:868.3px;top:56.00px;font-size:10.8px;line-height:14px;color:#000;transform:scaleX(0.925);transform-origin:0 0;width:63px;overflow:hidden;">OPER</div>
<div class="r" style="left:947px;top:57px;width:11px;height:11px;background:#fff;border:1px solid #000;"></div>
<div class="r" style="left:980px;top:56px;width:30px;height:13px;background:#000;border:1px solid #B8B8B8;"></div>
<div class="r" style="left:0px;top:89px;width:1013px;height:1px;background:#A0A0A0;"></div>
<div class="t" style="left:0px;width:39.5px;text-align:right;top:74.26px;font-size:10.8px;line-height:14px;color:#000">00005</div>
<div class="t " style="left:359.6px;top:74.00px;font-size:10.8px;line-height:14px;color:#000;transform:scaleX(0.925);transform-origin:0 0;">PARACIN</div>
<div class="t " style="left:626.2px;top:74.00px;font-size:10.8px;line-height:14px;color:#000;">Standardni</div>
<div class="t" style="left:702px;width:45px;text-align:right;top:74.26px;font-size:10.8px;line-height:14px;color:#000">0</div>
<div class="t " style="left:753px;top:74.00px;font-size:11.19px;line-height:14px;color:#000;">30.12.2020 11:39:21</div>
<div class="t " style="left:868.3px;top:74.00px;font-size:10.8px;line-height:14px;color:#000;transform:scaleX(0.925);transform-origin:0 0;width:63px;overflow:hidden;">MARIJA</div>
<div class="r" style="left:947px;top:75px;width:11px;height:11px;background:#fff;border:1px solid #000;"></div>
<div class="r" style="left:980px;top:74px;width:30px;height:13px;background:#000;border:1px solid #B8B8B8;"></div>
<div class="r" style="left:0px;top:107px;width:1013px;height:1px;background:#A0A0A0;"></div>
<div class="t" style="left:0px;width:39.5px;text-align:right;top:92.26px;font-size:10.8px;line-height:14px;color:#000">00006</div>
<div class="t " style="left:359.6px;top:92.00px;font-size:10.8px;line-height:14px;color:#000;transform:scaleX(0.925);transform-origin:0 0;">PARAĆIN</div>
<div class="t " style="left:626.2px;top:92.00px;font-size:10.8px;line-height:14px;color:#000;">Standardni</div>
<div class="t" style="left:702px;width:45px;text-align:right;top:92.26px;font-size:10.8px;line-height:14px;color:#000">0</div>
<div class="t " style="left:753px;top:92.00px;font-size:11.19px;line-height:14px;color:#000;">13.10.2022 13:05:42</div>
<div class="t " style="left:868.3px;top:92.00px;font-size:10.8px;line-height:14px;color:#000;transform:scaleX(0.925);transform-origin:0 0;width:63px;overflow:hidden;">OPER</div>
<div class="r" style="left:947px;top:93px;width:11px;height:11px;background:#fff;border:1px solid #000;"></div>
<div class="r" style="left:980px;top:92px;width:30px;height:13px;background:#000;border:1px solid #B8B8B8;"></div>
<div class="r" style="left:0px;top:125px;width:1013px;height:1px;background:#A0A0A0;"></div>
<div class="t" style="left:0px;width:39.5px;text-align:right;top:110.26px;font-size:10.8px;line-height:14px;color:#000">00007</div>
<div class="t " style="left:626.2px;top:110.00px;font-size:10.8px;line-height:14px;color:#000;">Standardni</div>
<div class="t" style="left:702px;width:45px;text-align:right;top:110.26px;font-size:10.8px;line-height:14px;color:#000">0</div>
<div class="t " style="left:753px;top:110.00px;font-size:11.19px;line-height:14px;color:#000;">22.09.2022 14:25:46</div>
<div class="t " style="left:868.3px;top:110.00px;font-size:10.8px;line-height:14px;color:#000;transform:scaleX(0.925);transform-origin:0 0;width:63px;overflow:hidden;">OPER</div>
<div class="r" style="left:947px;top:111px;width:11px;height:11px;background:#fff;border:1px solid #000;"></div>
<div class="r" style="left:980px;top:110px;width:30px;height:13px;background:#000;border:1px solid #B8B8B8;"></div>
<div class="r" style="left:0px;top:143px;width:1013px;height:1px;background:#A0A0A0;"></div>
<div class="t" style="left:0px;width:39.5px;text-align:right;top:128.26px;font-size:10.8px;line-height:14px;color:#008000">00008</div>
<div class="t " style="left:359.6px;top:128.00px;font-size:10.8px;line-height:14px;color:#008000;transform:scaleX(0.925);transform-origin:0 0;">BOLEČ</div>
<div class="t " style="left:626.2px;top:128.00px;font-size:10.8px;line-height:14px;color:#008000;">Standardni</div>
<div class="t" style="left:702px;width:45px;text-align:right;top:128.26px;font-size:10.8px;line-height:14px;color:#008000">0</div>
<div class="t " style="left:753px;top:128.00px;font-size:11.19px;line-height:14px;color:#008000;">23.09.2022 13:47:12</div>
<div class="t " style="left:868.3px;top:128.00px;font-size:10.8px;line-height:14px;color:#008000;transform:scaleX(0.925);transform-origin:0 0;width:63px;overflow:hidden;">OPER</div>
<div class="r" style="left:947px;top:129px;width:11px;height:11px;background:#fff;border:1px solid #000;"></div>
<div class="r" style="left:980px;top:128px;width:30px;height:13px;background:#008000;border:1px solid #B8B8B8;"></div>
<div class="r" style="left:0px;top:144px;width:1013px;height:17px;background:#FFDCDC;"></div>
<div class="r" style="left:0px;top:161px;width:1013px;height:1px;background:#A0A0A0;"></div>
<div class="t" style="left:0px;width:39.5px;text-align:right;top:146.26px;font-size:10.8px;line-height:14px;color:#000">00009</div>
<div class="t " style="left:359.6px;top:146.00px;font-size:10.8px;line-height:14px;color:#000;transform:scaleX(0.925);transform-origin:0 0;">PARAĆIN</div>
<div class="t " style="left:626.2px;top:146.00px;font-size:10.8px;line-height:14px;color:#000;">Standardni</div>
<div class="t" style="left:702px;width:45px;text-align:right;top:146.26px;font-size:10.8px;line-height:14px;color:#000">0</div>
<div class="t " style="left:753px;top:146.00px;font-size:11.19px;line-height:14px;color:#000;">28.08.2021 12:05:12</div>
<div class="t " style="left:868.3px;top:146.00px;font-size:10.8px;line-height:14px;color:#000;transform:scaleX(0.925);transform-origin:0 0;width:63px;overflow:hidden;">MARIJA</div>
<div class="r" style="left:947px;top:147px;width:11px;height:11px;background:#fff;border:1px solid #000;"></div>
<svg class="r" style="left:949px;top:149px;" width="7" height="7" viewBox="0 0 7 7"><path d="M0.5 3.5 L2.7 6 L6.5 0.8" fill="none" stroke="#000" stroke-width="1.6"/></svg>
<div class="r" style="left:980px;top:146px;width:30px;height:13px;background:#000;border:1px solid #B8B8B8;"></div>
<div class="r" style="left:0px;top:179px;width:1013px;height:1px;background:#A0A0A0;"></div>
<div class="t" style="left:0px;width:39.5px;text-align:right;top:164.26px;font-size:10.8px;line-height:14px;color:#000">00010</div>
<div class="t " style="left:359.6px;top:164.00px;font-size:10.8px;line-height:14px;color:#000;transform:scaleX(0.925);transform-origin:0 0;">ĆUPRIJA</div>
<div class="t " style="left:626.2px;top:164.00px;font-size:10.8px;line-height:14px;color:#000;">Standardni</div>
<div class="t" style="left:702px;width:45px;text-align:right;top:164.26px;font-size:10.8px;line-height:14px;color:#000">0</div>
<div class="t " style="left:753px;top:164.00px;font-size:11.19px;line-height:14px;color:#000;">28.08.2021 12:05:12</div>
<div class="t " style="left:868.3px;top:164.00px;font-size:10.8px;line-height:14px;color:#000;transform:scaleX(0.925);transform-origin:0 0;width:63px;overflow:hidden;">MARIJA</div>
<div class="r" style="left:947px;top:165px;width:11px;height:11px;background:#fff;border:1px solid #000;"></div>
<div class="r" style="left:980px;top:164px;width:30px;height:13px;background:#000;border:1px solid #B8B8B8;"></div>
<div class="r" style="left:0px;top:197px;width:1013px;height:1px;background:#A0A0A0;"></div>
<div class="t" style="left:0px;width:39.5px;text-align:right;top:182.26px;font-size:10.8px;line-height:14px;color:#000">00011</div>
<div class="t " style="left:359.6px;top:182.00px;font-size:10.8px;line-height:14px;color:#000;transform:scaleX(0.925);transform-origin:0 0;">LOZOVIK</div>
<div class="t " style="left:626.2px;top:182.00px;font-size:10.8px;line-height:14px;color:#000;">Standardni</div>
<div class="t" style="left:702px;width:45px;text-align:right;top:182.26px;font-size:10.8px;line-height:14px;color:#000">0</div>
<div class="t " style="left:753px;top:182.00px;font-size:11.19px;line-height:14px;color:#000;">23.09.2022 13:47:20</div>
<div class="t " style="left:868.3px;top:182.00px;font-size:10.8px;line-height:14px;color:#000;transform:scaleX(0.925);transform-origin:0 0;width:63px;overflow:hidden;">OPER</div>
<div class="r" style="left:947px;top:183px;width:11px;height:11px;background:#fff;border:1px solid #000;"></div>
<div class="r" style="left:980px;top:182px;width:30px;height:13px;background:#000;border:1px solid #B8B8B8;"></div>
<div class="r" style="left:0px;top:215px;width:1013px;height:1px;background:#A0A0A0;"></div>
<div class="t" style="left:0px;width:39.5px;text-align:right;top:200.26px;font-size:10.8px;line-height:14px;color:#008000">00012</div>
<div class="t " style="left:359.6px;top:200.00px;font-size:10.8px;line-height:14px;color:#008000;transform:scaleX(0.925);transform-origin:0 0;">ĆUPRIJA</div>
<div class="t " style="left:626.2px;top:200.00px;font-size:10.8px;line-height:14px;color:#008000;">Standardni</div>
<div class="t" style="left:702px;width:45px;text-align:right;top:200.26px;font-size:10.8px;line-height:14px;color:#008000">0</div>
<div class="t " style="left:753px;top:200.00px;font-size:11.19px;line-height:14px;color:#008000;">30.12.2020 11:39:21</div>
<div class="t " style="left:868.3px;top:200.00px;font-size:10.8px;line-height:14px;color:#008000;transform:scaleX(0.925);transform-origin:0 0;width:63px;overflow:hidden;">MARIJA</div>
<div class="r" style="left:947px;top:201px;width:11px;height:11px;background:#fff;border:1px solid #000;"></div>
<div class="r" style="left:980px;top:200px;width:30px;height:13px;background:#008000;border:1px solid #B8B8B8;"></div>
<div class="r" style="left:0px;top:233px;width:1013px;height:1px;background:#A0A0A0;"></div>
<div class="t" style="left:0px;width:39.5px;text-align:right;top:218.26px;font-size:10.8px;line-height:14px;color:#008000">00013</div>
<div class="t " style="left:359.6px;top:218.00px;font-size:10.8px;line-height:14px;color:#008000;transform:scaleX(0.925);transform-origin:0 0;">SENJE</div>
<div class="t " style="left:626.2px;top:218.00px;font-size:10.8px;line-height:14px;color:#008000;">Standardni</div>
<div class="t" style="left:702px;width:45px;text-align:right;top:218.26px;font-size:10.8px;line-height:14px;color:#008000">0</div>
<div class="t " style="left:753px;top:218.00px;font-size:11.19px;line-height:14px;color:#008000;">22.09.2022 13:01:27</div>
<div class="t " style="left:868.3px;top:218.00px;font-size:10.8px;line-height:14px;color:#008000;transform:scaleX(0.925);transform-origin:0 0;width:63px;overflow:hidden;">OPER</div>
<div class="r" style="left:947px;top:219px;width:11px;height:11px;background:#fff;border:1px solid #000;"></div>
<div class="r" style="left:980px;top:218px;width:30px;height:13px;background:#008000;border:1px solid #B8B8B8;"></div>
<div class="r" style="left:0px;top:251px;width:1013px;height:1px;background:#A0A0A0;"></div>
<div class="t" style="left:0px;width:39.5px;text-align:right;top:236.26px;font-size:10.8px;line-height:14px;color:#000">00014</div>
<div class="t " style="left:359.6px;top:236.00px;font-size:10.8px;line-height:14px;color:#000;transform:scaleX(0.925);transform-origin:0 0;">KREZBINAC</div>
<div class="t " style="left:626.2px;top:236.00px;font-size:10.8px;line-height:14px;color:#000;">Standardni</div>
<div class="t" style="left:702px;width:45px;text-align:right;top:236.26px;font-size:10.8px;line-height:14px;color:#000">0</div>
<div class="t " style="left:753px;top:236.00px;font-size:11.19px;line-height:14px;color:#000;">30.12.2020 11:39:21</div>
<div class="t " style="left:868.3px;top:236.00px;font-size:10.8px;line-height:14px;color:#000;transform:scaleX(0.925);transform-origin:0 0;width:63px;overflow:hidden;">KRISTINA</div>
<div class="r" style="left:947px;top:237px;width:11px;height:11px;background:#fff;border:1px solid #000;"></div>
<div class="r" style="left:980px;top:236px;width:30px;height:13px;background:#000;border:1px solid #B8B8B8;"></div>
<div class="r" style="left:0px;top:269px;width:1013px;height:1px;background:#A0A0A0;"></div>
<div class="t" style="left:0px;width:39.5px;text-align:right;top:254.26px;font-size:10.8px;line-height:14px;color:#000">00015</div>
<div class="t " style="left:626.2px;top:254.00px;font-size:10.8px;line-height:14px;color:#000;">Standardni</div>
<div class="t" style="left:702px;width:45px;text-align:right;top:254.26px;font-size:10.8px;line-height:14px;color:#000">0</div>
<div class="t " style="left:753px;top:254.00px;font-size:11.19px;line-height:14px;color:#000;">30.12.2020 11:39:21</div>
<div class="t " style="left:868.3px;top:254.00px;font-size:10.8px;line-height:14px;color:#000;transform:scaleX(0.925);transform-origin:0 0;width:63px;overflow:hidden;">MARIJA</div>
<div class="r" style="left:947px;top:255px;width:11px;height:11px;background:#fff;border:1px solid #000;"></div>
<div class="r" style="left:980px;top:254px;width:30px;height:13px;background:#000;border:1px solid #B8B8B8;"></div>
<div class="r" style="left:0px;top:287px;width:1013px;height:1px;background:#A0A0A0;"></div>
<div class="t" style="left:0px;width:39.5px;text-align:right;top:272.26px;font-size:10.8px;line-height:14px;color:#000">00016</div>
<div class="t " style="left:359.6px;top:272.00px;font-size:10.8px;line-height:14px;color:#000;transform:scaleX(0.925);transform-origin:0 0;">KONJUH</div>
<div class="t " style="left:626.2px;top:272.00px;font-size:10.8px;line-height:14px;color:#000;">Standardni</div>
<div class="t" style="left:702px;width:45px;text-align:right;top:272.26px;font-size:10.8px;line-height:14px;color:#000">0</div>
<div class="t " style="left:753px;top:272.00px;font-size:11.19px;line-height:14px;color:#000;">30.12.2020 11:39:21</div>
<div class="t " style="left:868.3px;top:272.00px;font-size:10.8px;line-height:14px;color:#000;transform:scaleX(0.925);transform-origin:0 0;width:63px;overflow:hidden;">MARIJA</div>
<div class="r" style="left:947px;top:273px;width:11px;height:11px;background:#fff;border:1px solid #000;"></div>
<div class="r" style="left:980px;top:272px;width:30px;height:13px;background:#000;border:1px solid #B8B8B8;"></div>
<div class="r" style="left:0px;top:305px;width:1013px;height:1px;background:#A0A0A0;"></div>
<div class="t" style="left:0px;width:39.5px;text-align:right;top:290.26px;font-size:10.8px;line-height:14px;color:#008000">00017</div>
<div class="t " style="left:359.6px;top:290.00px;font-size:10.8px;line-height:14px;color:#008000;transform:scaleX(0.925);transform-origin:0 0;">JAGODINA</div>
<div class="t " style="left:626.2px;top:290.00px;font-size:10.8px;line-height:14px;color:#008000;">Standardni</div>
<div class="t" style="left:702px;width:45px;text-align:right;top:290.26px;font-size:10.8px;line-height:14px;color:#008000">0</div>
<div class="t " style="left:753px;top:290.00px;font-size:11.19px;line-height:14px;color:#008000;">30.12.2020 11:39:21</div>
<div class="t " style="left:868.3px;top:290.00px;font-size:10.8px;line-height:14px;color:#008000;transform:scaleX(0.925);transform-origin:0 0;width:63px;overflow:hidden;">MARIJA</div>
<div class="r" style="left:947px;top:291px;width:11px;height:11px;background:#fff;border:1px solid #000;"></div>
<div class="r" style="left:980px;top:290px;width:30px;height:13px;background:#008000;border:1px solid #B8B8B8;"></div>
<div class="r" style="left:0px;top:306px;width:1013px;height:17px;background:#4079CF;"></div>
<div class="r" style="left:0px;top:323px;width:1013px;height:1px;background:#A0A0A0;"></div>
<div class="t" style="left:0px;width:39.5px;text-align:right;top:308.26px;font-size:10.8px;line-height:14px;color:#fff">00018</div>
<div class="t " style="left:359.6px;top:308.00px;font-size:10.8px;line-height:14px;color:#fff;transform:scaleX(0.925);transform-origin:0 0;">NOVI SAD</div>
<div class="t " style="left:626.2px;top:308.00px;font-size:10.8px;line-height:14px;color:#fff;">Standardni</div>
<div class="t" style="left:702px;width:45px;text-align:right;top:308.26px;font-size:10.8px;line-height:14px;color:#fff">0</div>
<div class="t " style="left:753px;top:308.00px;font-size:11.19px;line-height:14px;color:#fff;">30.12.2020 11:39:21</div>
<div class="t " style="left:868.3px;top:308.00px;font-size:10.8px;line-height:14px;color:#fff;transform:scaleX(0.925);transform-origin:0 0;width:63px;overflow:hidden;">MARIJA</div>
<div class="r" style="left:947px;top:309px;width:11px;height:11px;background:#fff;border:1px solid #000;"></div>
<div class="r" style="left:980px;top:308px;width:30px;height:13px;background:#000;border:1px solid #B8B8B8;"></div>
<div class="r" style="left:0px;top:341px;width:1013px;height:1px;background:#A0A0A0;"></div>
<div class="t" style="left:0px;width:39.5px;text-align:right;top:326.26px;font-size:10.8px;line-height:14px;color:#000">00019</div>
<div class="t " style="left:359.6px;top:326.00px;font-size:10.8px;line-height:14px;color:#000;transform:scaleX(0.925);transform-origin:0 0;">JAGODINA</div>
<div class="t " style="left:626.2px;top:326.00px;font-size:10.8px;line-height:14px;color:#000;">Standardni</div>
<div class="t" style="left:702px;width:45px;text-align:right;top:326.26px;font-size:10.8px;line-height:14px;color:#000">0</div>
<div class="t " style="left:753px;top:326.00px;font-size:11.19px;line-height:14px;color:#000;">28.08.2021 12:05:12</div>
<div class="t " style="left:868.3px;top:326.00px;font-size:10.8px;line-height:14px;color:#000;transform:scaleX(0.925);transform-origin:0 0;width:63px;overflow:hidden;">MARIJA</div>
<div class="r" style="left:947px;top:327px;width:11px;height:11px;background:#fff;border:1px solid #000;"></div>
<div class="r" style="left:980px;top:326px;width:30px;height:13px;background:#000;border:1px solid #B8B8B8;"></div>
<div class="r" style="left:0px;top:359px;width:1013px;height:1px;background:#A0A0A0;"></div>
<div class="t" style="left:0px;width:39.5px;text-align:right;top:344.26px;font-size:10.8px;line-height:14px;color:#000">00020</div>
<div class="t " style="left:359.6px;top:344.00px;font-size:10.8px;line-height:14px;color:#000;transform:scaleX(0.925);transform-origin:0 0;">MALA KRSNA</div>
<div class="t " style="left:626.2px;top:344.00px;font-size:10.8px;line-height:14px;color:#000;">Standardni</div>
<div class="t" style="left:702px;width:45px;text-align:right;top:344.26px;font-size:10.8px;line-height:14px;color:#000">0</div>
<div class="t " style="left:753px;top:344.00px;font-size:11.19px;line-height:14px;color:#000;">23.09.2022 13:47:26</div>
<div class="t " style="left:868.3px;top:344.00px;font-size:10.8px;line-height:14px;color:#000;transform:scaleX(0.925);transform-origin:0 0;width:63px;overflow:hidden;">OPER</div>
<div class="r" style="left:947px;top:345px;width:11px;height:11px;background:#fff;border:1px solid #000;"></div>
<div class="r" style="left:980px;top:344px;width:30px;height:13px;background:#000;border:1px solid #B8B8B8;"></div>
<div class="r" style="left:0px;top:377px;width:1013px;height:1px;background:#A0A0A0;"></div>
<div class="t" style="left:0px;width:39.5px;text-align:right;top:362.26px;font-size:10.8px;line-height:14px;color:#000">00021</div>
<div class="t " style="left:359.6px;top:362.00px;font-size:10.8px;line-height:14px;color:#000;transform:scaleX(0.925);transform-origin:0 0;">BEOGRAD</div>
<div class="t " style="left:626.2px;top:362.00px;font-size:10.8px;line-height:14px;color:#000;">Standardni</div>
<div class="t" style="left:702px;width:45px;text-align:right;top:362.26px;font-size:10.8px;line-height:14px;color:#000">0</div>
<div class="t " style="left:753px;top:362.00px;font-size:11.19px;line-height:14px;color:#000;">27.09.2022 16:09:03</div>
<div class="t " style="left:868.3px;top:362.00px;font-size:10.8px;line-height:14px;color:#000;transform:scaleX(0.925);transform-origin:0 0;width:63px;overflow:hidden;">OPER</div>
<div class="r" style="left:947px;top:363px;width:11px;height:11px;background:#fff;border:1px solid #000;"></div>
<div class="r" style="left:980px;top:362px;width:30px;height:13px;background:#000;border:1px solid #B8B8B8;"></div>
<div class="r" style="left:0px;top:395px;width:1013px;height:1px;background:#A0A0A0;"></div>
<div class="t" style="left:0px;width:39.5px;text-align:right;top:380.26px;font-size:10.8px;line-height:14px;color:#000">00022</div>
<div class="t " style="left:359.6px;top:380.00px;font-size:10.8px;line-height:14px;color:#000;transform:scaleX(0.925);transform-origin:0 0;">PARACIN</div>
<div class="t " style="left:626.2px;top:380.00px;font-size:10.8px;line-height:14px;color:#000;">Standardni</div>
<div class="t" style="left:702px;width:45px;text-align:right;top:380.26px;font-size:10.8px;line-height:14px;color:#000">0</div>
<div class="t " style="left:753px;top:380.00px;font-size:11.19px;line-height:14px;color:#000;">22.09.2022 13:38:21</div>
<div class="t " style="left:868.3px;top:380.00px;font-size:10.8px;line-height:14px;color:#000;transform:scaleX(0.925);transform-origin:0 0;width:63px;overflow:hidden;">OPER</div>
<div class="r" style="left:947px;top:381px;width:11px;height:11px;background:#fff;border:1px solid #000;"></div>
<div class="r" style="left:980px;top:380px;width:30px;height:13px;background:#000;border:1px solid #B8B8B8;"></div>
<div class="r" style="left:0px;top:413px;width:1013px;height:1px;background:#A0A0A0;"></div>
<div class="t" style="left:0px;width:39.5px;text-align:right;top:398.26px;font-size:10.8px;line-height:14px;color:#000">00023</div>
<div class="t " style="left:359.6px;top:398.00px;font-size:10.8px;line-height:14px;color:#000;transform:scaleX(0.925);transform-origin:0 0;">KLADOVO</div>
<div class="t " style="left:626.2px;top:398.00px;font-size:10.8px;line-height:14px;color:#000;">Standardni</div>
<div class="t" style="left:702px;width:45px;text-align:right;top:398.26px;font-size:10.8px;line-height:14px;color:#000">0</div>
<div class="t " style="left:753px;top:398.00px;font-size:11.19px;line-height:14px;color:#000;">22.09.2022 12:32:56</div>
<div class="t " style="left:868.3px;top:398.00px;font-size:10.8px;line-height:14px;color:#000;transform:scaleX(0.925);transform-origin:0 0;width:63px;overflow:hidden;">OPER</div>
<div class="r" style="left:947px;top:399px;width:11px;height:11px;background:#fff;border:1px solid #000;"></div>
<div class="r" style="left:980px;top:398px;width:30px;height:13px;background:#000;border:1px solid #B8B8B8;"></div>
<div class="r" style="left:0px;top:431px;width:1013px;height:1px;background:#A0A0A0;"></div>
<div class="t" style="left:0px;width:39.5px;text-align:right;top:416.26px;font-size:10.8px;line-height:14px;color:#000">00024</div>
<div class="t " style="left:359.6px;top:416.00px;font-size:10.8px;line-height:14px;color:#000;transform:scaleX(0.925);transform-origin:0 0;">KNJAZEVAC</div>
<div class="t " style="left:626.2px;top:416.00px;font-size:10.8px;line-height:14px;color:#000;">Standardni</div>
<div class="t" style="left:702px;width:45px;text-align:right;top:416.26px;font-size:10.8px;line-height:14px;color:#000">0</div>
<div class="t " style="left:753px;top:416.00px;font-size:11.19px;line-height:14px;color:#000;">22.09.2022 12:33:11</div>
<div class="t " style="left:868.3px;top:416.00px;font-size:10.8px;line-height:14px;color:#000;transform:scaleX(0.925);transform-origin:0 0;width:63px;overflow:hidden;">OPER</div>
<div class="r" style="left:947px;top:417px;width:11px;height:11px;background:#fff;border:1px solid #000;"></div>
<div class="r" style="left:980px;top:416px;width:30px;height:13px;background:#000;border:1px solid #B8B8B8;"></div>
<div class="r" style="left:0px;top:449px;width:1013px;height:1px;background:#A0A0A0;"></div>
<div class="t" style="left:0px;width:39.5px;text-align:right;top:434.26px;font-size:10.8px;line-height:14px;color:#000">00025</div>
<div class="t " style="left:359.6px;top:434.00px;font-size:10.8px;line-height:14px;color:#000;transform:scaleX(0.925);transform-origin:0 0;">KRUSEVAC</div>
<div class="t " style="left:626.2px;top:434.00px;font-size:10.8px;line-height:14px;color:#000;">Standardni</div>
<div class="t" style="left:702px;width:45px;text-align:right;top:434.26px;font-size:10.8px;line-height:14px;color:#000">0</div>
<div class="t " style="left:753px;top:434.00px;font-size:11.19px;line-height:14px;color:#000;">30.12.2020 11:39:21</div>
<div class="t " style="left:868.3px;top:434.00px;font-size:10.8px;line-height:14px;color:#000;transform:scaleX(0.925);transform-origin:0 0;width:63px;overflow:hidden;">MARIJA</div>
<div class="r" style="left:947px;top:435px;width:11px;height:11px;background:#fff;border:1px solid #000;"></div>
<div class="r" style="left:980px;top:434px;width:30px;height:13px;background:#000;border:1px solid #B8B8B8;"></div>
<div class="r" style="left:0px;top:467px;width:1013px;height:1px;background:#A0A0A0;"></div>
<div class="t" style="left:0px;width:39.5px;text-align:right;top:452.26px;font-size:10.8px;line-height:14px;color:#008000">00026</div>
<div class="t " style="left:359.6px;top:452.00px;font-size:10.8px;line-height:14px;color:#008000;transform:scaleX(0.925);transform-origin:0 0;">PETROVAC</div>
<div class="t " style="left:626.2px;top:452.00px;font-size:10.8px;line-height:14px;color:#008000;">Standardni</div>
<div class="t" style="left:702px;width:45px;text-align:right;top:452.26px;font-size:10.8px;line-height:14px;color:#008000">0</div>
<div class="t " style="left:753px;top:452.00px;font-size:11.19px;line-height:14px;color:#008000;">30.12.2020 11:39:21</div>
<div class="t " style="left:868.3px;top:452.00px;font-size:10.8px;line-height:14px;color:#008000;transform:scaleX(0.925);transform-origin:0 0;width:63px;overflow:hidden;">MARIJA</div>
<div class="r" style="left:947px;top:453px;width:11px;height:11px;background:#fff;border:1px solid #000;"></div>
<div class="r" style="left:980px;top:452px;width:30px;height:13px;background:#008000;border:1px solid #B8B8B8;"></div>
<div class="r" style="left:0px;top:485px;width:1013px;height:1px;background:#A0A0A0;"></div>
<div class="t" style="left:0px;width:39.5px;text-align:right;top:470.26px;font-size:10.8px;line-height:14px;color:#000">00027</div>
<div class="t " style="left:359.6px;top:470.00px;font-size:10.8px;line-height:14px;color:#000;transform:scaleX(0.925);transform-origin:0 0;">KNJAZEVAC</div>
<div class="t " style="left:626.2px;top:470.00px;font-size:10.8px;line-height:14px;color:#000;">Standardni</div>
<div class="t" style="left:702px;width:45px;text-align:right;top:470.26px;font-size:10.8px;line-height:14px;color:#000">0</div>
<div class="t " style="left:753px;top:470.00px;font-size:11.19px;line-height:14px;color:#000;">30.12.2020 11:39:21</div>
<div class="t " style="left:868.3px;top:470.00px;font-size:10.8px;line-height:14px;color:#000;transform:scaleX(0.925);transform-origin:0 0;width:63px;overflow:hidden;">MARIJA</div>
<div class="r" style="left:947px;top:471px;width:11px;height:11px;background:#fff;border:1px solid #000;"></div>
<div class="r" style="left:980px;top:470px;width:30px;height:13px;background:#000;border:1px solid #B8B8B8;"></div>
<div class="r" style="left:0px;top:503px;width:1013px;height:1px;background:#A0A0A0;"></div>
<div class="t" style="left:0px;width:39.5px;text-align:right;top:488.26px;font-size:10.8px;line-height:14px;color:#000">00028</div>
<div class="t " style="left:359.6px;top:488.00px;font-size:10.8px;line-height:14px;color:#000;transform:scaleX(0.925);transform-origin:0 0;">PARAĆIN</div>
<div class="t " style="left:626.2px;top:488.00px;font-size:10.8px;line-height:14px;color:#000;">Standardni</div>
<div class="t" style="left:702px;width:45px;text-align:right;top:488.26px;font-size:10.8px;line-height:14px;color:#000">0</div>
<div class="t " style="left:753px;top:488.00px;font-size:11.19px;line-height:14px;color:#000;">22.09.2022 12:46:59</div>
<div class="t " style="left:868.3px;top:488.00px;font-size:10.8px;line-height:14px;color:#000;transform:scaleX(0.925);transform-origin:0 0;width:63px;overflow:hidden;">OPER</div>
<div class="r" style="left:947px;top:489px;width:11px;height:11px;background:#fff;border:1px solid #000;"></div>
<div class="r" style="left:980px;top:488px;width:30px;height:13px;background:#000;border:1px solid #B8B8B8;"></div>
<div class="r" style="left:0px;top:521px;width:1013px;height:1px;background:#A0A0A0;"></div>
<div class="t" style="left:0px;width:39.5px;text-align:right;top:506.26px;font-size:10.8px;line-height:14px;color:#000">00029</div>
<div class="t " style="left:359.6px;top:506.00px;font-size:10.8px;line-height:14px;color:#000;transform:scaleX(0.925);transform-origin:0 0;">PARACIN</div>
<div class="t " style="left:626.2px;top:506.00px;font-size:10.8px;line-height:14px;color:#000;">Standardni</div>
<div class="t" style="left:702px;width:45px;text-align:right;top:506.26px;font-size:10.8px;line-height:14px;color:#000">0</div>
<div class="t " style="left:753px;top:506.00px;font-size:11.19px;line-height:14px;color:#000;">22.09.2022 12:44:20</div>
<div class="t " style="left:868.3px;top:506.00px;font-size:10.8px;line-height:14px;color:#000;transform:scaleX(0.925);transform-origin:0 0;width:63px;overflow:hidden;">OPER</div>
<div class="r" style="left:947px;top:507px;width:11px;height:11px;background:#fff;border:1px solid #000;"></div>
<div class="r" style="left:980px;top:506px;width:30px;height:13px;background:#000;border:1px solid #B8B8B8;"></div>
<div class="r" style="left:0px;top:539px;width:1013px;height:1px;background:#A0A0A0;"></div>
<div class="t" style="left:0px;width:39.5px;text-align:right;top:524.26px;font-size:10.8px;line-height:14px;color:#000">00030</div>
<div class="t " style="left:359.6px;top:524.00px;font-size:10.8px;line-height:14px;color:#000;transform:scaleX(0.925);transform-origin:0 0;">DESPOTOVAC</div>
<div class="t " style="left:626.2px;top:524.00px;font-size:10.8px;line-height:14px;color:#000;">Standardni</div>
<div class="t" style="left:702px;width:45px;text-align:right;top:524.26px;font-size:10.8px;line-height:14px;color:#000">0</div>
<div class="t " style="left:753px;top:524.00px;font-size:11.19px;line-height:14px;color:#000;">28.08.2021 12:05:12</div>
<div class="t " style="left:868.3px;top:524.00px;font-size:10.8px;line-height:14px;color:#000;transform:scaleX(0.925);transform-origin:0 0;width:63px;overflow:hidden;">MARIJA</div>
<div class="r" style="left:947px;top:525px;width:11px;height:11px;background:#fff;border:1px solid #000;"></div>
<div class="r" style="left:980px;top:524px;width:30px;height:13px;background:#000;border:1px solid #B8B8B8;"></div>
<div class="r" style="left:0px;top:557px;width:1013px;height:1px;background:#A0A0A0;"></div>
<div class="t" style="left:0px;width:39.5px;text-align:right;top:542.26px;font-size:10.8px;line-height:14px;color:#000">00031</div>
<div class="t " style="left:359.6px;top:542.00px;font-size:10.8px;line-height:14px;color:#000;transform:scaleX(0.925);transform-origin:0 0;">KRAGUJEVAC</div>
<div class="t " style="left:626.2px;top:542.00px;font-size:10.8px;line-height:14px;color:#000;">Standardni</div>
<div class="t" style="left:702px;width:45px;text-align:right;top:542.26px;font-size:10.8px;line-height:14px;color:#000">0</div>
<div class="t " style="left:753px;top:542.00px;font-size:11.19px;line-height:14px;color:#000;">30.12.2020 11:39:21</div>
<div class="t " style="left:868.3px;top:542.00px;font-size:10.8px;line-height:14px;color:#000;transform:scaleX(0.925);transform-origin:0 0;width:63px;overflow:hidden;">JOVANOVIC</div>
<div class="r" style="left:947px;top:543px;width:11px;height:11px;background:#fff;border:1px solid #000;"></div>
<div class="r" style="left:980px;top:542px;width:30px;height:13px;background:#000;border:1px solid #B8B8B8;"></div>
<div class="r" style="left:0px;top:575px;width:1013px;height:1px;background:#A0A0A0;"></div>
<div class="t" style="left:0px;width:39.5px;text-align:right;top:560.26px;font-size:10.8px;line-height:14px;color:#000">00032</div>
<div class="t " style="left:359.6px;top:560.00px;font-size:10.8px;line-height:14px;color:#000;transform:scaleX(0.925);transform-origin:0 0;">JAGODINA</div>
<div class="t " style="left:626.2px;top:560.00px;font-size:10.8px;line-height:14px;color:#000;">Standardni</div>
<div class="t" style="left:702px;width:45px;text-align:right;top:560.26px;font-size:10.8px;line-height:14px;color:#000">0</div>
<div class="t " style="left:753px;top:560.00px;font-size:11.19px;line-height:14px;color:#000;">28.08.2021 12:05:12</div>
<div class="t " style="left:868.3px;top:560.00px;font-size:10.8px;line-height:14px;color:#000;transform:scaleX(0.925);transform-origin:0 0;width:63px;overflow:hidden;">MARIJA</div>
<div class="r" style="left:947px;top:561px;width:11px;height:11px;background:#fff;border:1px solid #000;"></div>
<div class="r" style="left:980px;top:560px;width:30px;height:13px;background:#000;border:1px solid #B8B8B8;"></div>
<div class="r" style="left:0px;top:593px;width:1013px;height:1px;background:#A0A0A0;"></div>
<div class="t" style="left:0px;width:39.5px;text-align:right;top:578.26px;font-size:10.8px;line-height:14px;color:#000">00033</div>
<div class="t " style="left:359.6px;top:578.00px;font-size:10.8px;line-height:14px;color:#000;transform:scaleX(0.925);transform-origin:0 0;">PARAĆIN</div>
<div class="t " style="left:626.2px;top:578.00px;font-size:10.8px;line-height:14px;color:#000;">Standardni</div>
<div class="t" style="left:702px;width:45px;text-align:right;top:578.26px;font-size:10.8px;line-height:14px;color:#000">0</div>
<div class="t " style="left:753px;top:578.00px;font-size:11.19px;line-height:14px;color:#000;">28.08.2021 12:05:12</div>
<div class="t " style="left:868.3px;top:578.00px;font-size:10.8px;line-height:14px;color:#000;transform:scaleX(0.925);transform-origin:0 0;width:63px;overflow:hidden;">MARIJA</div>
<div class="r" style="left:947px;top:579px;width:11px;height:11px;background:#fff;border:1px solid #000;"></div>
<div class="r" style="left:980px;top:578px;width:30px;height:13px;background:#000;border:1px solid #B8B8B8;"></div>
<div class="r" style="left:0px;top:611px;width:1013px;height:1px;background:#A0A0A0;"></div>
<div class="t" style="left:0px;width:39.5px;text-align:right;top:596.26px;font-size:10.8px;line-height:14px;color:#000">00034</div>
<div class="t " style="left:359.6px;top:596.00px;font-size:10.8px;line-height:14px;color:#000;transform:scaleX(0.925);transform-origin:0 0;">PARAĆIN</div>
<div class="t " style="left:626.2px;top:596.00px;font-size:10.8px;line-height:14px;color:#000;">Standardni</div>
<div class="t" style="left:702px;width:45px;text-align:right;top:596.26px;font-size:10.8px;line-height:14px;color:#000">0</div>
<div class="t " style="left:753px;top:596.00px;font-size:11.19px;line-height:14px;color:#000;">28.08.2021 12:05:12</div>
<div class="t " style="left:868.3px;top:596.00px;font-size:10.8px;line-height:14px;color:#000;transform:scaleX(0.925);transform-origin:0 0;width:63px;overflow:hidden;">MARIJA</div>
<div class="r" style="left:947px;top:597px;width:11px;height:11px;background:#fff;border:1px solid #000;"></div>
<div class="r" style="left:980px;top:596px;width:30px;height:13px;background:#000;border:1px solid #B8B8B8;"></div>
<div class="r" style="left:42px;top:0px;width:1px;height:609px;background:#A0A0A0;"></div>
<div class="r" style="left:280px;top:0px;width:1px;height:609px;background:#A0A0A0;"></div>
<div class="r" style="left:357px;top:0px;width:1px;height:609px;background:#A0A0A0;"></div>
<div class="r" style="left:455px;top:0px;width:1px;height:609px;background:#7F7F7F;"></div>
<div class="r" style="left:481px;top:0px;width:1px;height:609px;background:#A0A0A0;"></div>
<div class="r" style="left:581px;top:0px;width:1px;height:609px;background:#A0A0A0;"></div>
<div class="r" style="left:624px;top:0px;width:1px;height:609px;background:#A0A0A0;"></div>
<div class="r" style="left:702px;top:0px;width:1px;height:609px;background:#A0A0A0;"></div>
<div class="r" style="left:750px;top:0px;width:1px;height:609px;background:#A0A0A0;"></div>
<div class="r" style="left:866px;top:0px;width:1px;height:609px;background:#A0A0A0;"></div>
<div class="r" style="left:927px;top:0px;width:1px;height:609px;background:#A0A0A0;"></div>
<div class="r" style="left:977px;top:0px;width:1px;height:609px;background:#A0A0A0;"></div>
<div class="r" style="left:1012px;top:0px;width:1px;height:609px;background:#A0A0A0;"></div>
<div class="r" style="left:44px;top:0px;width:234px;height:305px;background:#fff;"></div>
<div class="r" style="left:44px;top:324px;width:234px;height:285px;background:#fff;"></div>
<div class="r" style="left:283px;top:0px;width:72px;height:305px;background:#fff;"></div>
<div class="r" style="left:283px;top:324px;width:72px;height:285px;background:#fff;"></div>
</div>
<div class="r" style="left:215px;top:446px;width:1013px;height:1px;background:repeating-linear-gradient(90deg,#D4A040 0 2px,#8A8A8A 2px 4px)"></div>
<div class="r" style="left:215px;top:464px;width:1013px;height:1px;background:repeating-linear-gradient(90deg,#D4A040 0 2px,#8A8A8A 2px 4px)"></div>
<div class="r" style="left:670px;top:121px;width:1px;height:19px;background:#7F7F7F;"></div>
<div class="r" style="left:215px;top:446px;width:1px;height:19px;background:repeating-linear-gradient(180deg,#D4A040 0 2px,#8A8A8A 2px 4px)"></div>
<div class="r" style="left:1228px;top:121px;width:17px;height:629px;background:#F0F0F0;"></div>
<div class="r" style="left:1229px;top:138px;width:15px;height:16px;background:#C8C8C8;"></div>
<svg class="r" style="left:1232px;top:127px;" width="9" height="6" viewBox="0 0 9 6"><path d="M0.8 5.2 L4.5 1.5 L8.2 5.2" fill="none" stroke="#606060" stroke-width="1.8"/></svg>
<svg class="r" style="left:1232px;top:738px;" width="9" height="6" viewBox="0 0 9 6"><path d="M0.8 0.8 L4.5 4.5 L8.2 0.8" fill="none" stroke="#606060" stroke-width="1.8"/></svg>
<div class="r" style="left:840px;top:447px;width:77px;height:17px;background:#fff;"></div>
<div class="t " style="left:841.5px;top:449.00px;font-size:10.8px;line-height:14px;color:#000;">Standardni</div>
<div class="r" style="left:899px;top:448px;width:17px;height:15px;background:#C8C8C8;"></div>
<svg class="r" style="left:903px;top:453px;" width="8" height="4" viewBox="0 0 8 4"><path d="M0 0 H8 L4 4Z" fill="#000"/></svg>
<div class="r" style="left:841px;top:463px;width:76px;height:77px;background:#fff;border:1px solid #000;"></div>
<div class="r" style="left:843px;top:465px;width:72px;height:14px;background:#0A64D6;outline:1px dotted #D09030;outline-offset:-1px;"></div>
<div class="t " style="left:843.5px;top:466.00px;font-size:10.6px;line-height:13px;color:#fff;">Standardni</div>
<div class="t " style="left:843.5px;top:481.00px;font-size:10.6px;line-height:13px;color:#000;">Delhaize</div>
<div class="t " style="left:843.5px;top:496.00px;font-size:10.6px;line-height:13px;color:#000;">Metro</div>
<div class="t " style="left:843.5px;top:511.00px;font-size:10.6px;line-height:13px;color:#000;">DM</div>
<div class="t " style="left:843.5px;top:526.00px;font-size:10.6px;line-height:13px;color:#000;">Mercator</div>
<svg class="r" style="left:826px;top:432px" width="104" height="114"><rect x="3.2" y="3.4" width="97" height="106.4" rx="13" ry="13" fill="none" stroke="#E51E25" stroke-width="4.5"/></svg>
<div class="r" style="left:215px;top:750px;width:1030px;height:18px;background:#F0F0F0;"></div>
<div class="r" style="left:216px;top:750px;width:15px;height:17px;background:#D8D8D8;"></div>
<div class="r" style="left:233px;top:750px;width:15px;height:17px;background:#D8D8D8;"></div>
<div class="r" style="left:250px;top:750px;width:15px;height:17px;background:#D8D8D8;"></div>
<div class="r" style="left:345px;top:750px;width:15px;height:17px;background:#D8D8D8;"></div>
<div class="r" style="left:362px;top:750px;width:15px;height:17px;background:#D8D8D8;"></div>
<div class="r" style="left:379px;top:750px;width:15px;height:17px;background:#D8D8D8;"></div>
<div class="r" style="left:396px;top:750px;width:15px;height:17px;background:#D8D8D8;"></div>
<div class="r" style="left:413px;top:750px;width:15px;height:17px;background:#D8D8D8;"></div>
<div class="r" style="left:430px;top:750px;width:15px;height:17px;background:#D8D8D8;"></div>
<div class="r" style="left:447px;top:750px;width:15px;height:17px;background:#E8E8E8;"></div>
<div class="r" style="left:464px;top:750px;width:15px;height:17px;background:#E8E8E8;"></div>
<div class="r" style="left:481px;top:750px;width:15px;height:17px;background:#D8D8D8;"></div>
<div class="r" style="left:498px;top:750px;width:15px;height:17px;background:#D8D8D8;"></div>
<div class="r" style="left:515px;top:750px;width:15px;height:17px;background:#E8E8E8;"></div>
<div class="r" style="left:532px;top:750px;width:15px;height:17px;background:#E8E8E8;"></div>
<svg class="r" style="left:216px;top:750px;" width="15" height="17" viewBox="0 0 15 17"><path d="M3 5 V12" stroke="#303030" stroke-width="1.5"/><path d="M8 5 L4 8.5 L8 12Z M12 5 L8 8.5 L12 12Z" fill="#303030"/></svg>
<svg class="r" style="left:233px;top:750px;" width="15" height="17" viewBox="0 0 15 17"><path d="M7.5 5 L3.5 8.5 L7.5 12Z M11.5 5 L7.5 8.5 L11.5 12Z" fill="#303030"/></svg>
<svg class="r" style="left:250px;top:750px;" width="15" height="17" viewBox="0 0 15 17"><path d="M9 5 L5 8.5 L9 12Z" fill="#303030"/></svg>
<div class="t " style="left:273.2px;top:752.00px;font-size:12.65px;line-height:16px;color:#000;">18 od 3456</div>
<svg class="r" style="left:345px;top:750px;" width="15" height="17" viewBox="0 0 15 17"><path d="M6 5 L10 8.5 L6 12Z" fill="#303030"/></svg>
<svg class="r" style="left:362px;top:750px;" width="15" height="17" viewBox="0 0 15 17"><path d="M3.5 5 L7.5 8.5 L3.5 12Z M7.5 5 L11.5 8.5 L7.5 12Z" fill="#303030"/></svg>
<svg class="r" style="left:379px;top:750px;" width="15" height="17" viewBox="0 0 15 17"><path d="M2.5 5 L6.5 8.5 L2.5 12Z M6.5 5 L10.5 8.5 L6.5 12Z" fill="#303030"/><path d="M11.5 5 V12" stroke="#303030" stroke-width="1.5"/></svg>
<svg class="r" style="left:396px;top:750px;" width="15" height="17" viewBox="0 0 15 17"><path d="M7.5 3.5 V13.5 M2.5 8.5 H12.5" stroke="#1E9A1E" stroke-width="2.6"/></svg>
<svg class="r" style="left:413px;top:750px;" width="15" height="17" viewBox="0 0 15 17"><path d="M2.5 8.5 H12.5" stroke="#D02020" stroke-width="2.6"/></svg>
<svg class="r" style="left:430px;top:750px;" width="15" height="17" viewBox="0 0 15 17"><path d="M3.5 11 L7.5 6.5 L11.5 11Z" fill="#303030"/></svg>
<svg class="r" style="left:447px;top:750px;" width="15" height="17" viewBox="0 0 15 17"><path d="M2.5 9 L6 12 L12.5 5" fill="none" stroke="#C8C8C8" stroke-width="1.8"/></svg>
<svg class="r" style="left:464px;top:750px;" width="15" height="17" viewBox="0 0 15 17"><path d="M3 4 L12 13 M12 4 L3 13" stroke="#B8B8B8" stroke-width="1.8"/></svg>
<svg class="r" style="left:481px;top:750px;" width="15" height="17" viewBox="0 0 15 17"><path d="M2.5 10 Q4 5.5 8.5 6 Q11 6.5 12 9" fill="none" stroke="#303030" stroke-width="1.8"/><path d="M9 10.5 L13.5 12.5 L13.5 7.5Z" fill="#303030"/></svg>
<svg class="r" style="left:498px;top:750px;" width="15" height="17" viewBox="0 0 15 17"><path d="M7.5 3.5 V13.5 M2.5 8.5 H12.5 M4 5 L11 12 M11 5 L4 12" stroke="#000" stroke-width="1.3"/></svg>
<svg class="r" style="left:515px;top:750px;" width="15" height="17" viewBox="0 0 15 17"><path d="M8.5 4.5 V14.5 M3.5 9.5 H13.5 M5 6 L12 13 M12 6 L5 13" stroke="#B8B8B8" stroke-width="1.3"/><path d="M1 2 L5 5 L1 8Z" fill="#888"/></svg>
<svg class="r" style="left:532px;top:750px;" width="15" height="17" viewBox="0 0 15 17"><path d="M3 5 H12 L9 9 V12 H6 V9Z" fill="#D0D0D0"/></svg>
<div class="r" style="left:1049px;top:750px;width:162px;height:17px;background:#C8C8C8;"></div>
<svg class="r" style="left:603px;top:755px;" width="6" height="9" viewBox="0 0 6 9"><path d="M5.2 0.8 L1.5 4.5 L5.2 8.2" fill="none" stroke="#505050" stroke-width="1.8"/></svg>
<svg class="r" style="left:1218px;top:755px;" width="6" height="9" viewBox="0 0 6 9"><path d="M0.8 0.8 L4.5 4.5 L0.8 8.2" fill="none" stroke="#505050" stroke-width="1.8"/></svg>
<div class="r" style="left:213px;top:770px;width:980px;height:26px;overflow:hidden">
<svg class="r" style="left:1px;top:1px" width="93" height="25"><path d="M0.5 25 V5 L5 0.5 H91.5 V25" fill="#F7F7F7" stroke="#A8A8A8"/><rect x="4" y="1" width="88" height="3" fill="#2B579A"/></svg>
<div class="t " style="left:8.5px;top:9.00px;font-size:12px;line-height:15px;color:#000;transform:scaleX(0.9853);transform-origin:0 0;">Osnovni podaci</div>
<svg class="r" style="left:95px;top:1px" width="101" height="25"><defs><linearGradient id="bt308" x1="0" y1="0" x2="0" y2="1"><stop offset="0" stop-color="#FBFBFB"/><stop offset="1" stop-color="#E2E2E2"/></linearGradient></defs><path d="M0.5 25 V6 L6 0.5 H99.5 V25" fill="url(#bt308)" stroke="#ABABAB"/></svg>
<div class="t " style="left:102.5px;top:9.00px;font-size:12px;line-height:15px;color:#000;transform:scaleX(0.9450);transform-origin:0 0;">Finansijski podaci</div>
<svg class="r" style="left:198px;top:1px" width="82" height="25"><defs><linearGradient id="bt411" x1="0" y1="0" x2="0" y2="1"><stop offset="0" stop-color="#FBFBFB"/><stop offset="1" stop-color="#E2E2E2"/></linearGradient></defs><path d="M0.5 25 V6 L6 0.5 H80.5 V25" fill="url(#bt411)" stroke="#ABABAB"/></svg>
<div class="t " style="left:205.5px;top:9.00px;font-size:12px;line-height:15px;color:#000;transform:scaleX(1.0067);transform-origin:0 0;">Tekući računi</div>
<svg class="r" style="left:282px;top:1px" width="103" height="25"><defs><linearGradient id="bt495" x1="0" y1="0" x2="0" y2="1"><stop offset="0" stop-color="#FBFBFB"/><stop offset="1" stop-color="#E2E2E2"/></linearGradient></defs><path d="M0.5 25 V6 L6 0.5 H101.5 V25" fill="url(#bt495)" stroke="#ABABAB"/></svg>
<div class="t " style="left:289.5px;top:9.00px;font-size:12px;line-height:15px;color:#000;transform:scaleX(0.9797);transform-origin:0 0;">Poslovne jedinice</div>
<svg class="r" style="left:386px;top:1px" width="102" height="25"><defs><linearGradient id="bt599" x1="0" y1="0" x2="0" y2="1"><stop offset="0" stop-color="#FBFBFB"/><stop offset="1" stop-color="#E2E2E2"/></linearGradient></defs><path d="M0.5 25 V6 L6 0.5 H100.5 V25" fill="url(#bt599)" stroke="#ABABAB"/></svg>
<div class="t " style="left:393.5px;top:9.00px;font-size:12px;line-height:15px;color:#000;transform:scaleX(1.0600);transform-origin:0 0;">Atributi partnera</div>
<svg class="r" style="left:489px;top:1px" width="100" height="25"><defs><linearGradient id="bt702" x1="0" y1="0" x2="0" y2="1"><stop offset="0" stop-color="#FBFBFB"/><stop offset="1" stop-color="#E2E2E2"/></linearGradient></defs><path d="M0.5 25 V6 L6 0.5 H98.5 V25" fill="url(#bt702)" stroke="#ABABAB"/></svg>
<div class="t " style="left:496.5px;top:9.00px;font-size:12px;line-height:15px;color:#000;transform:scaleX(0.9477);transform-origin:0 0;">Uslovi poslovanja</div>
<svg class="r" style="left:590px;top:1px" width="72" height="25"><defs><linearGradient id="bt803" x1="0" y1="0" x2="0" y2="1"><stop offset="0" stop-color="#FBFBFB"/><stop offset="1" stop-color="#E2E2E2"/></linearGradient></defs><path d="M0.5 25 V6 L6 0.5 H70.5 V25" fill="url(#bt803)" stroke="#ABABAB"/></svg>
<div class="t " style="left:597.5px;top:9.00px;font-size:12px;line-height:15px;color:#000;transform:scaleX(0.9858);transform-origin:0 0;">Upozorenja</div>
<svg class="r" style="left:664px;top:1px" width="100" height="25"><defs><linearGradient id="bt877" x1="0" y1="0" x2="0" y2="1"><stop offset="0" stop-color="#FBFBFB"/><stop offset="1" stop-color="#E2E2E2"/></linearGradient></defs><path d="M0.5 25 V6 L6 0.5 H98.5 V25" fill="url(#bt877)" stroke="#ABABAB"/></svg>
<div class="t " style="left:671.5px;top:9.00px;font-size:12px;line-height:15px;color:#000;transform:scaleX(1.0051);transform-origin:0 0;">Vezni dokumenti</div>
<svg class="r" style="left:766px;top:1px" width="124" height="25"><defs><linearGradient id="bt979" x1="0" y1="0" x2="0" y2="1"><stop offset="0" stop-color="#FBFBFB"/><stop offset="1" stop-color="#E2E2E2"/></linearGradient></defs><path d="M0.5 25 V6 L6 0.5 H122.5 V25" fill="url(#bt979)" stroke="#ABABAB"/></svg>
<div class="t " style="left:773.5px;top:9.00px;font-size:12px;line-height:15px;color:#000;transform:scaleX(1.0159);transform-origin:0 0;">Pregled dokumenata</div>
<svg class="r" style="left:892px;top:1px" width="69" height="25"><defs><linearGradient id="bt1105" x1="0" y1="0" x2="0" y2="1"><stop offset="0" stop-color="#FBFBFB"/><stop offset="1" stop-color="#E2E2E2"/></linearGradient></defs><path d="M0.5 25 V6 L6 0.5 H67.5 V25" fill="url(#bt1105)" stroke="#ABABAB"/></svg>
<div class="t " style="left:899.5px;top:9.00px;font-size:12px;line-height:15px;color:#000;transform:scaleX(0.9795);transform-origin:0 0;">Napomena</div>
<svg class="r" style="left:962px;top:1px" width="66" height="25"><defs><linearGradient id="bt1175" x1="0" y1="0" x2="0" y2="1"><stop offset="0" stop-color="#FBFBFB"/><stop offset="1" stop-color="#E2E2E2"/></linearGradient></defs><path d="M0.5 25 V6 L6 0.5 H64.5 V25" fill="url(#bt1175)" stroke="#ABABAB"/></svg>
<div class="t " style="left:969px;top:9.00px;font-size:11.6px;line-height:14px;color:#000;">Stanje</div>
</div>
<div class="r" style="left:1194px;top:772px;width:16px;height:17px;background:#F0F0F0;border:1px solid #C0C0C0;"></div>
<div class="r" style="left:1211px;top:772px;width:17px;height:17px;background:#F0F0F0;border:1px solid #C0C0C0;"></div>
<svg class="r" style="left:1216px;top:776px;" width="6" height="9" viewBox="0 0 6 9"><path d="M5.5 0 V9 L0.5 4.5Z" fill="#A8A8A8"/></svg>
<div class="r" style="left:1229px;top:772px;width:17px;height:17px;background:#F0F0F0;border:1px solid #C0C0C0;"></div>
<svg class="r" style="left:1235px;top:776px;" width="6" height="9" viewBox="0 0 6 9"><path d="M0.5 0 V9 L5.5 4.5Z" fill="#000"/></svg>
<div class="r" style="left:213px;top:796px;width:1033px;height:1px;background:#A8A8A8;"></div>
<div class="r" style="left:214px;top:798px;width:92px;height:28px;border:1px solid #C8C8C8;background:linear-gradient(#F4F4F4,#E6E6E6)"></div>
<div class="r" style="left:218px;top:806px;width:11px;height:11px;background:#fff;border:1px solid #000;"></div>
<div class="t " style="left:235.3px;top:805.00px;font-size:12px;line-height:15px;color:#000;transform:scaleX(0.9237);transform-origin:0 0;">F2-IZMENE</div>
<div class="r" style="left:308px;top:798px;width:22px;height:28px;border:1px solid #C8C8C8;background:linear-gradient(#F4F4F4,#E6E6E6)"></div>
<svg class="r" style="left:313px;top:805px;" width="13" height="14" viewBox="0 0 13 14"><path d="M0 0.5H5M0 3H5M0 5.5H5M0 8H5M0 10.5H5M0 13H5 M7 0.5H12M7 3H12M7 5.5H12M7 8H12M7 10.5H12M7 13H12" stroke="#333" stroke-width="1"/></svg>
<div class="r" style="left:332px;top:798px;width:182px;height:28px;border:1px solid #C8C8C8;background:linear-gradient(#F4F4F4,#E6E6E6)"></div>
<div class="t " style="left:341px;top:805.00px;font-size:12px;line-height:15px;color:#000;transform:scaleX(0.8861);transform-origin:0 0;">F5 - NOVI, Shift+F5 - NOVI (NBS)</div>
<div class="r" style="left:516px;top:798px;width:355px;height:28px;border:1px solid #C8C8C8;background:linear-gradient(#F4F4F4,#E6E6E6)"></div>
<div class="r" style="left:517px;top:799px;width:352px;height:26px;overflow:hidden">
<div class="t " style="left:4.899999999999977px;top:6.00px;font-size:12px;line-height:15px;color:#000;transform:scaleX(1.0114);transform-origin:0 0;">F1 - Po šifri, F7 - Po nazivu, F10 - Po atributu, F8 - Samo sa prometom</div>
</div>
<div class="r" style="left:877px;top:800px;width:85px;height:24px;border:1px solid #ABABAB;background:#E1E1E1;box-shadow:0 0 0 1px #F8F8F8,0 0 0 2px #D2D2D2"></div>
<div class="t " style="left:885.1px;top:805.00px;font-size:12px;line-height:15px;color:#000;transform:scaleX(1.0311);transform-origin:0 0;">El.servisi</div>
<svg class="r" style="left:951px;top:810px;" width="8" height="4" viewBox="0 0 8 4"><path d="M0 0 H8 L4 4Z" fill="#000"/></svg>
<div class="r" style="left:971px;top:800px;width:49px;height:24px;border:1px solid #ABABAB;background:#E1E1E1;box-shadow:0 0 0 1px #F8F8F8,0 0 0 2px #D2D2D2"></div>
<div class="t " style="left:976.3px;top:805.00px;font-size:12px;line-height:15px;color:#000;transform:scaleX(1.0101);transform-origin:0 0;">Labele</div>
<div class="r" style="left:1030px;top:800px;width:74px;height:24px;border:1px solid #ABABAB;background:#E1E1E1;box-shadow:0 0 0 1px #F8F8F8,0 0 0 2px #D2D2D2"></div>
<div class="t " style="left:1037.2px;top:805.00px;font-size:12px;line-height:15px;color:#000;transform:scaleX(1.0134);transform-origin:0 0;">Kartica <u>O</u>P</div>
<div class="r" style="left:1113px;top:800px;width:76px;height:24px;border:1px solid #ABABAB;background:#E1E1E1;box-shadow:0 0 0 1px #F8F8F8,0 0 0 2px #D2D2D2"></div>
<div class="t " style="left:1119.5px;top:805.00px;font-size:12px;line-height:15px;color:#000;transform:scaleX(1.0281);transform-origin:0 0;">Kartica <u>F</u>IN</div>
<div class="r" style="left:1197px;top:800px;width:47px;height:24px;border:1px solid #ABABAB;background:#E1E1E1;box-shadow:0 0 0 1px #F8F8F8,0 0 0 2px #D2D2D2"></div>
<div class="t " style="left:1211.1px;top:805.00px;font-size:12px;line-height:15px;color:#000;transform:scaleX(0.9055);transform-origin:0 0;">OK</div>
<div class="r" style="left:0px;top:58px;width:1px;height:771px;background:#2B579A;"></div>
<div class="r" style="left:0px;top:827px;width:1459px;height:2px;background:#2B579A;"></div>
<svg class="r" style="left:1249px;top:93px" width="48" height="27"><path d="M0.5 27 V5 L5 0.5 H46.5 V27" fill="#F7F7F7" stroke="#A8A8A8"/><rect x="4" y="1" width="43" height="3" fill="#2B579A"/></svg>
<div class="t " style="left:1256.5px;top:101.00px;font-size:12px;line-height:15px;color:#000;transform:scaleX(1.0176);transform-origin:0 0;">Planer</div>
<svg class="r" style="left:1298px;top:93px" width="71" height="26"><defs><linearGradient id="g129893" x1="0" y1="0" x2="0" y2="1"><stop offset="0" stop-color="#FBFBFB"/><stop offset="1" stop-color="#E2E2E2"/></linearGradient></defs><path d="M0.5 26 V6 L6 0.5 H69.5 V26" fill="url(#g129893)" stroke="#ABABAB"/></svg>
<div class="t " style="left:1304.3px;top:101.00px;font-size:12px;line-height:15px;color:#000;transform:scaleX(1.0513);transform-origin:0 0;">Za štampu</div>
<svg class="r" style="left:1369px;top:93px" width="57" height="26"><defs><linearGradient id="g136993" x1="0" y1="0" x2="0" y2="1"><stop offset="0" stop-color="#FBFBFB"/><stop offset="1" stop-color="#E2E2E2"/></linearGradient></defs><path d="M0.5 26 V6 L6 0.5 H55.5 V26" fill="url(#g136993)" stroke="#ABABAB"/></svg>
<div class="t " style="left:1376.6px;top:101.00px;font-size:12px;line-height:15px;color:#000;transform:scaleX(1.1481);transform-origin:0 0;">Tajmeri</div>
<div class="r" style="left:1250px;top:119px;width:208px;height:708px;background:#F0F0F0;"></div>
<div class="r" style="left:1248px;top:93px;width:1px;height:734px;background:#2E5298;"></div>
<div class="r" style="left:1249px;top:119px;width:1px;height:708px;background:#A8A8A8;"></div>
<div class="r" style="left:1294px;top:119px;width:148px;height:23px;background:#F8F8F8;border-left:1px solid #C8C8C8;"></div>
<div class="t " style="left:867.5px;width:1000px;text-align:center;top:124.00px;font-size:12.62px;line-height:16px;color:#000;">petak, 14. oktobar</div>
<div class="r" style="left:1294px;top:142px;width:148px;height:3px;background:#C8C8C8;"></div>
<div class="r" style="left:1250px;top:144px;width:43px;height:1px;background:#A8A8A8;"></div>
<div class="r" style="left:1293px;top:119px;width:1px;height:708px;background:#A8A8A8;"></div>
<div class="r" style="left:1294px;top:145px;width:148px;height:682px;background:#fff;"></div>
<div class="r" style="left:1300px;top:145px;width:1px;height:682px;background:#000;"></div>
<div class="r" style="left:1301px;top:166px;width:140px;height:1px;background:#A0A0A0;"></div>
<div class="r" style="left:1301px;top:188px;width:140px;height:1px;background:#A0A0A0;"></div>
<div class="r" style="left:1301px;top:210px;width:140px;height:1px;background:#A0A0A0;"></div>
<div class="r" style="left:1301px;top:232px;width:140px;height:1px;background:#A0A0A0;"></div>
<div class="r" style="left:1301px;top:254px;width:140px;height:1px;background:#A0A0A0;"></div>
<div class="r" style="left:1301px;top:276px;width:140px;height:1px;background:#A0A0A0;"></div>
<div class="r" style="left:1301px;top:298px;width:140px;height:1px;background:#A0A0A0;"></div>
<div class="r" style="left:1301px;top:320px;width:140px;height:1px;background:#A0A0A0;"></div>
<div class="r" style="left:1301px;top:342px;width:140px;height:1px;background:#A0A0A0;"></div>
<div class="r" style="left:1301px;top:364px;width:140px;height:1px;background:#A0A0A0;"></div>
<div class="r" style="left:1301px;top:386px;width:140px;height:1px;background:#A0A0A0;"></div>
<div class="r" style="left:1301px;top:408px;width:140px;height:1px;background:#A0A0A0;"></div>
<div class="r" style="left:1301px;top:430px;width:140px;height:1px;background:#A0A0A0;"></div>
<div class="r" style="left:1301px;top:452px;width:140px;height:1px;background:#A0A0A0;"></div>
<div class="r" style="left:1301px;top:474px;width:140px;height:1px;background:#A0A0A0;"></div>
<div class="r" style="left:1301px;top:496px;width:140px;height:1px;background:#A0A0A0;"></div>
<div class="r" style="left:1301px;top:518px;width:140px;height:1px;background:#A0A0A0;"></div>
<div class="r" style="left:1301px;top:540px;width:140px;height:1px;background:#A0A0A0;"></div>
<div class="r" style="left:1301px;top:562px;width:140px;height:1px;background:#A0A0A0;"></div>
<div class="r" style="left:1301px;top:584px;width:140px;height:1px;background:#A0A0A0;"></div>
<div class="r" style="left:1301px;top:606px;width:140px;height:1px;background:#A0A0A0;"></div>
<div class="r" style="left:1301px;top:628px;width:140px;height:1px;background:#A0A0A0;"></div>
<div class="r" style="left:1301px;top:650px;width:140px;height:1px;background:#A0A0A0;"></div>
<div class="r" style="left:1301px;top:672px;width:140px;height:1px;background:#A0A0A0;"></div>
<div class="r" style="left:1301px;top:694px;width:140px;height:1px;background:#A0A0A0;"></div>
<div class="r" style="left:1301px;top:716px;width:140px;height:1px;background:#A0A0A0;"></div>
<div class="r" style="left:1301px;top:738px;width:140px;height:1px;background:#A0A0A0;"></div>
<div class="r" style="left:1301px;top:760px;width:140px;height:1px;background:#A0A0A0;"></div>
<div class="r" style="left:1301px;top:782px;width:140px;height:1px;background:#A0A0A0;"></div>
<div class="r" style="left:1301px;top:804px;width:140px;height:1px;background:#A0A0A0;"></div>
<div class="r" style="left:1301px;top:826px;width:140px;height:1px;background:#A0A0A0;"></div>
<div class="r" style="left:1276px;top:166px;width:12px;height:1px;background:#A8A8A8;"></div>
<div class="t " style="left:1256px;top:148.00px;font-size:16px;line-height:20px;color:#000;">04</div>
<div class="t " style="left:1278px;top:151.00px;font-size:8.6px;line-height:11px;color:#000;transform:scaleX(0.8);transform-origin:0 0;">00</div>
<div class="r" style="left:1255px;top:188px;width:33px;height:1px;background:#A8A8A8;"></div>
<div class="r" style="left:1276px;top:210px;width:12px;height:1px;background:#A8A8A8;"></div>
<div class="t " style="left:1256px;top:192.00px;font-size:16px;line-height:20px;color:#000;">05</div>
<div class="t " style="left:1278px;top:195.00px;font-size:8.6px;line-height:11px;color:#000;transform:scaleX(0.8);transform-origin:0 0;">00</div>
<div class="r" style="left:1255px;top:232px;width:33px;height:1px;background:#A8A8A8;"></div>
<div class="r" style="left:1276px;top:254px;width:12px;height:1px;background:#A8A8A8;"></div>
<div class="t " style="left:1256px;top:236.00px;font-size:16px;line-height:20px;color:#000;">06</div>
<div class="t " style="left:1278px;top:239.00px;font-size:8.6px;line-height:11px;color:#000;transform:scaleX(0.8);transform-origin:0 0;">00</div>
<div class="r" style="left:1255px;top:276px;width:33px;height:1px;background:#A8A8A8;"></div>
<div class="r" style="left:1276px;top:298px;width:12px;height:1px;background:#A8A8A8;"></div>
<div class="t " style="left:1256px;top:280.00px;font-size:16px;line-height:20px;color:#000;">07</div>
<div class="t " style="left:1278px;top:283.00px;font-size:8.6px;line-height:11px;color:#000;transform:scaleX(0.8);transform-origin:0 0;">00</div>
<div class="r" style="left:1255px;top:320px;width:33px;height:1px;background:#A8A8A8;"></div>
<div class="r" style="left:1276px;top:342px;width:12px;height:1px;background:#A8A8A8;"></div>
<div class="t " style="left:1256px;top:324.00px;font-size:16px;line-height:20px;color:#000;">08</div>
<div class="t " style="left:1278px;top:327.00px;font-size:8.6px;line-height:11px;color:#000;transform:scaleX(0.8);transform-origin:0 0;">00</div>
<div class="r" style="left:1255px;top:364px;width:33px;height:1px;background:#A8A8A8;"></div>
<div class="r" style="left:1276px;top:386px;width:12px;height:1px;background:#A8A8A8;"></div>
<div class="t " style="left:1256px;top:368.00px;font-size:16px;line-height:20px;color:#000;">09</div>
<div class="t " style="left:1278px;top:371.00px;font-size:8.6px;line-height:11px;color:#000;transform:scaleX(0.8);transform-origin:0 0;">00</div>
<div class="r" style="left:1255px;top:408px;width:33px;height:1px;background:#A8A8A8;"></div>
<div class="r" style="left:1276px;top:430px;width:12px;height:1px;background:#A8A8A8;"></div>
<div class="t " style="left:1256px;top:412.00px;font-size:16px;line-height:20px;color:#000;">10</div>
<div class="t " style="left:1278px;top:415.00px;font-size:8.6px;line-height:11px;color:#000;transform:scaleX(0.8);transform-origin:0 0;">00</div>
<div class="r" style="left:1276px;top:474px;width:12px;height:1px;background:#A8A8A8;"></div>
<div class="t " style="left:1256px;top:456.00px;font-size:16px;line-height:20px;color:#000;">11</div>
<div class="t " style="left:1278px;top:459.00px;font-size:8.6px;line-height:11px;color:#000;transform:scaleX(0.8);transform-origin:0 0;">00</div>
<div class="r" style="left:1255px;top:496px;width:33px;height:1px;background:#A8A8A8;"></div>
<div class="r" style="left:1276px;top:518px;width:12px;height:1px;background:#A8A8A8;"></div>
<div class="t " style="left:1256px;top:500.00px;font-size:16px;line-height:20px;color:#000;">12</div>
<div class="t " style="left:1278px;top:503.00px;font-size:8.6px;line-height:11px;color:#000;transform:scaleX(0.8);transform-origin:0 0;">00</div>
<div class="r" style="left:1255px;top:540px;width:33px;height:1px;background:#A8A8A8;"></div>
<div class="r" style="left:1276px;top:562px;width:12px;height:1px;background:#A8A8A8;"></div>
<div class="t " style="left:1256px;top:544.00px;font-size:16px;line-height:20px;color:#000;">13</div>
<div class="t " style="left:1278px;top:547.00px;font-size:8.6px;line-height:11px;color:#000;transform:scaleX(0.8);transform-origin:0 0;">00</div>
<div class="r" style="left:1255px;top:584px;width:33px;height:1px;background:#A8A8A8;"></div>
<div class="r" style="left:1276px;top:606px;width:12px;height:1px;background:#A8A8A8;"></div>
<div class="t " style="left:1256px;top:588.00px;font-size:16px;line-height:20px;color:#000;">14</div>
<div class="t " style="left:1278px;top:591.00px;font-size:8.6px;line-height:11px;color:#000;transform:scaleX(0.8);transform-origin:0 0;">00</div>
<div class="r" style="left:1255px;top:628px;width:33px;height:1px;background:#A8A8A8;"></div>
<div class="r" style="left:1276px;top:650px;width:12px;height:1px;background:#A8A8A8;"></div>
<div class="t " style="left:1256px;top:632.00px;font-size:16px;line-height:20px;color:#000;">15</div>
<div class="t " style="left:1278px;top:635.00px;font-size:8.6px;line-height:11px;color:#000;transform:scaleX(0.8);transform-origin:0 0;">00</div>
<div class="r" style="left:1255px;top:672px;width:33px;height:1px;background:#A8A8A8;"></div>
<div class="r" style="left:1276px;top:694px;width:12px;height:1px;background:#A8A8A8;"></div>
<div class="t " style="left:1256px;top:676.00px;font-size:16px;line-height:20px;color:#000;">16</div>
<div class="t " style="left:1278px;top:679.00px;font-size:8.6px;line-height:11px;color:#000;transform:scaleX(0.8);transform-origin:0 0;">00</div>
<div class="r" style="left:1255px;top:716px;width:33px;height:1px;background:#A8A8A8;"></div>
<div class="r" style="left:1276px;top:738px;width:12px;height:1px;background:#A8A8A8;"></div>
<div class="t " style="left:1256px;top:720.00px;font-size:16px;line-height:20px;color:#000;">17</div>
<div class="t " style="left:1278px;top:723.00px;font-size:8.6px;line-height:11px;color:#000;transform:scaleX(0.8);transform-origin:0 0;">00</div>
<div class="r" style="left:1255px;top:760px;width:33px;height:1px;background:#A8A8A8;"></div>
<div class="r" style="left:1276px;top:782px;width:12px;height:1px;background:#A8A8A8;"></div>
<div class="t " style="left:1256px;top:764.00px;font-size:16px;line-height:20px;color:#000;">18</div>
<div class="t " style="left:1278px;top:767.00px;font-size:8.6px;line-height:11px;color:#000;transform:scaleX(0.8);transform-origin:0 0;">00</div>
<div class="r" style="left:1255px;top:804px;width:33px;height:1px;background:#A8A8A8;"></div>
<div class="r" style="left:1276px;top:826px;width:12px;height:1px;background:#A8A8A8;"></div>
<div class="t " style="left:1256px;top:808.00px;font-size:16px;line-height:20px;color:#000;">19</div>
<div class="t " style="left:1278px;top:811.00px;font-size:8.6px;line-height:11px;color:#000;transform:scaleX(0.8);transform-origin:0 0;">00</div>
<div class="r" style="left:1250px;top:453px;width:43px;height:4px;background:linear-gradient(#C8C8C8,#DCDCDC)"></div>
<div class="r" style="left:1442px;top:119px;width:16px;height:708px;background:#F0F0F0;"></div>
<div class="r" style="left:1442px;top:248px;width:15px;height:435px;background:#C8C8C8;"></div>
<div class="r" style="left:1458px;top:119px;width:1px;height:708px;background:#A0A0A0;"></div>
<svg class="r" style="left:1446px;top:125px;" width="9" height="6" viewBox="0 0 9 6"><path d="M0.8 5.2 L4.5 1.5 L8.2 5.2" fill="none" stroke="#606060" stroke-width="1.8"/></svg>
<svg class="r" style="left:1446px;top:816px;" width="9" height="6" viewBox="0 0 9 6"><path d="M0.8 0.8 L4.5 4.5 L8.2 0.8" fill="none" stroke="#606060" stroke-width="1.8"/></svg>
<div class="r" style="left:1294px;top:826px;width:148px;height:1px;background:#A0A0A0;"></div>
<div class="r" style="left:0px;top:827px;width:1459px;height:2px;background:#2B579A;"></div>
<div class="r" style="left:1401px;top:820px;width:21px;height:21px;border-radius:50%;background:#850000"></div>
<div class="t " style="left:1405px;top:824.00px;font-size:11px;line-height:14px;color:#fff;font-weight:bold;">75</div>
</body></html>
